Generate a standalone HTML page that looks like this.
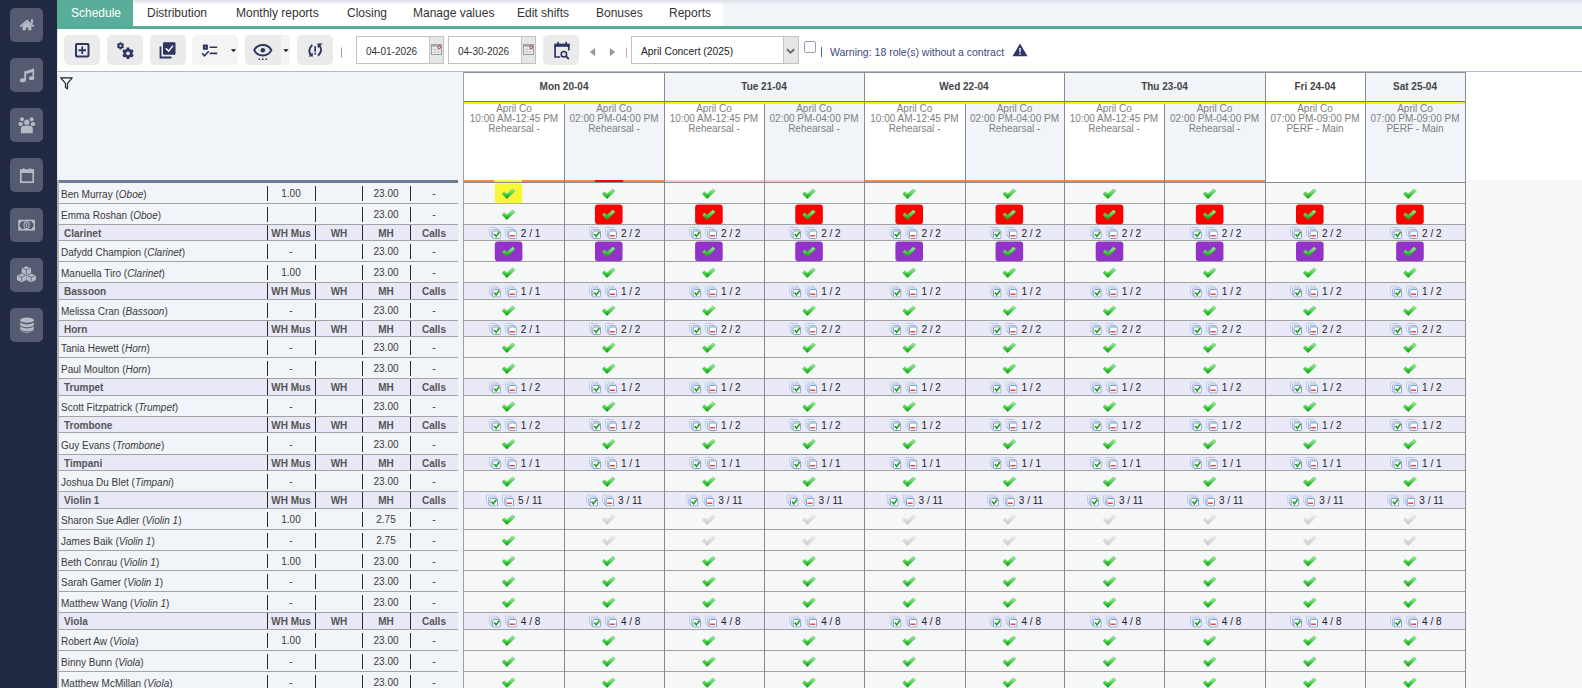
<!DOCTYPE html>
<html><head><meta charset="utf-8"><title>Schedule</title>
<style>
*{box-sizing:border-box;margin:0;padding:0}
html,body{width:1582px;height:688px;overflow:hidden;background:#fff;font-family:"Liberation Sans",sans-serif;color:#333}
.abs{position:absolute}
.sb{position:absolute;left:0;top:0;width:57px;height:688px;background:#212842}
.sbb{position:absolute;left:10px;width:33px;height:34px;border-radius:5px;background:#545a6f}
.sbb svg{position:absolute;left:0;top:0}
.tabs{position:absolute;left:57px;top:0;width:1525px;height:26px;background:#f2f5fa}
.tabw{position:absolute;left:76px;top:0;width:590px;height:26px;background:#fff}
.tabshade{position:absolute;left:0;top:0;width:1525px;height:5px;background:linear-gradient(#dde1e8,rgba(240,243,249,0))}
.tab{position:absolute;top:0;height:26px;line-height:26px;font-size:12px;color:#333;white-space:nowrap}
.green{position:absolute;left:57px;top:26px;width:1525px;height:3px;background:#55ad97}
.tb{position:absolute;left:57px;top:29px;width:1525px;height:43px;background:#fff;border-bottom:1px solid #9fbde8}
.btn{position:absolute;top:35px;height:30px;border-radius:5px;background:#ebebeb}
.pane{position:absolute;left:57px;top:72px;width:406px;height:616px;background:#f1f5fa}
.lt{position:absolute;left:57px;width:401px}
.nm{position:absolute;left:61px;font-size:10px;color:#3a3a3a;white-space:nowrap}
.gn{position:absolute;left:64px;font-size:10px;font-weight:bold;color:#555;white-space:nowrap}
.val{position:absolute;font-size:10px;color:#3a3a3a;text-align:center;width:48px}
.gh{position:absolute;font-size:10px;font-weight:bold;color:#555;text-align:center;width:48px}
.hd{position:absolute;font-size:10px;font-weight:bold;color:#444;text-align:center}
.sh{position:absolute;font-size:10px;line-height:10px;color:#7e7e7e;text-align:center;white-space:nowrap}
.cnt{position:absolute;font-size:10px;color:#222;white-space:nowrap}
</style></head><body>

<div class="sb"></div>
<div class="sbb" style="top:8px"><svg width="33" height="34" viewBox="0 0 33 34"><path d="M10.2 18.6 L17 12.6 L23.8 18.6" stroke="#b6bac6" stroke-width="1.7" fill="none"/><rect x="21" y="11.2" width="1.9" height="4.5" fill="#b6bac6"/><path d="M12.6 17.6 L17 13.8 L21.4 17.6 L21.4 22.2 L18.2 22.2 L18.2 19.4 L15.8 19.4 L15.8 22.2 L12.6 22.2 Z" fill="#b6bac6"/></svg></div>
<div class="sbb" style="top:58px"><svg width="33" height="34" viewBox="0 0 33 34"><path d="M14.6 13.4 L24 10.4 L24 13.6 L14.6 16.6 Z" fill="#b6bac6"/><rect x="14.3" y="13.4" width="1.8" height="9" fill="#b6bac6"/><rect x="22.4" y="10.6" width="1.7" height="10" fill="#b6bac6"/><ellipse cx="12.8" cy="22.3" rx="2.9" ry="2" fill="#b6bac6"/><ellipse cx="21.6" cy="20.2" rx="2.8" ry="1.9" fill="#b6bac6"/></svg></div>
<div class="sbb" style="top:108px"><svg width="33" height="34" viewBox="0 0 33 34"><circle cx="12" cy="11.3" r="2" fill="#b6bac6"/><circle cx="21.6" cy="11.3" r="2" fill="#b6bac6"/><ellipse cx="10.6" cy="16" rx="2.3" ry="2.1" fill="#b6bac6"/><ellipse cx="23" cy="16" rx="2.3" ry="2.1" fill="#b6bac6"/><circle cx="16.8" cy="14.3" r="3.1" stroke="#545a6f" stroke-width="0.7" fill="#b6bac6"/><path d="M10.9 25.2 L10.9 21 Q10.9 17.8 14 17.8 L19.6 17.8 Q22.8 17.8 22.8 21 L22.8 25.2 Z" fill="#b6bac6"/></svg></div>
<div class="sbb" style="top:158px"><svg width="33" height="34" viewBox="0 0 33 34"><rect x="10.8" y="12.2" width="12.4" height="12" fill="none" stroke="#b6bac6" stroke-width="1.7"/><rect x="10" y="11.4" width="14" height="3.6" fill="#b6bac6"/><path d="M12.2 11.6 Q13.7 8.4 15.2 11.6 Z M18.7 11.6 Q20.2 8.4 21.7 11.6 Z" fill="#b6bac6"/></svg></div>
<div class="sbb" style="top:208px"><svg width="33" height="34" viewBox="0 0 33 34"><rect x="8.2" y="11.7" width="16.8" height="10.9" fill="#b6bac6"/><path d="M11.5 13.2 H21.7 Q21.7 15.3 23.5 15.3 V19.1 Q21.7 19.1 21.7 21.1 H11.5 Q11.5 19.1 9.7 19.1 V15.3 Q11.5 15.3 11.5 13.2 Z" fill="#545a6f"/><ellipse cx="16.6" cy="17.15" rx="2.6" ry="3.4" fill="none" stroke="#b6bac6" stroke-width="1.1"/><rect x="16.1" y="15.4" width="1.1" height="3.6" fill="#b6bac6"/><rect x="15.4" y="15.4" width="1.2" height="0.9" fill="#b6bac6"/></svg></div>
<div class="sbb" style="top:258px"><svg width="33" height="34" viewBox="0 0 33 34"><path d="M16.4 8.2 L21.1 10.4 L21.1 14.7 L16.4 16.9 L11.7 14.7 L11.7 10.4 Z" fill="#b6bac6"/><path d="M11.6 15.5 L16.3 17.7 L16.3 22 L11.6 24.2 L6.9 22 L6.9 17.7 Z" fill="#b6bac6"/><path d="M21.2 15.5 L25.9 17.7 L25.9 22 L21.2 24.2 L16.5 22 L16.5 17.7 Z" fill="#b6bac6"/><path d="M13.2 10.5 L16.4 12 L19.6 10.5 M16.4 12 V15.8 M8.4 17.8 L11.6 19.3 L14.8 17.8 M11.6 19.3 V23.1 M18 17.8 L21.2 19.3 L24.4 17.8 M21.2 19.3 V23.1" stroke="#545a6f" stroke-width="0.8" fill="none"/></svg></div>
<div class="sbb" style="top:308px"><svg width="33" height="34" viewBox="0 0 33 34"><ellipse cx="17" cy="12.2" rx="6.8" ry="2.6" fill="#b6bac6"/><path d="M10.2 14.6 Q17 18.4 23.8 14.6 L23.8 17.4 Q17 21.2 10.2 17.4 Z" fill="#b6bac6"/><path d="M10.2 18.6 Q17 22.4 23.8 18.6 L23.8 21.4 Q17 25.2 10.2 21.4 Z" fill="#b6bac6"/><path d="M10.2 22.2 Q17 26 23.8 22.2 L23.8 22.8 Q17 26.8 10.2 22.8 Z" fill="#b6bac6"/></svg></div>
<div class="tabs"><div class="tabw"></div><div class="tabshade"></div></div>
<div class="abs" style="left:57px;top:0;width:76px;height:26px;background:#58ae98"></div>
<div class="tab" style="left:71px;color:#fff">Schedule</div>
<div class="tab" style="left:147px;color:#333">Distribution</div>
<div class="tab" style="left:236px;color:#333">Monthly reports</div>
<div class="tab" style="left:347px;color:#333">Closing</div>
<div class="tab" style="left:413px;color:#333">Manage values</div>
<div class="tab" style="left:517px;color:#333">Edit shifts</div>
<div class="tab" style="left:596px;color:#333">Bonuses</div>
<div class="tab" style="left:669px;color:#333">Reports</div>
<div class="green"></div>
<div class="tb"></div>
<div class="btn" style="left:64px;width:36px;background:#ebebeb"></div>
<div class="btn" style="left:107px;width:36px;background:#ebebeb"></div>
<div class="btn" style="left:150px;width:36px;background:#ebebeb"></div>
<div class="btn" style="left:192px;width:46px;background:#f4f4f4"></div>
<div class="btn" style="left:245px;width:45px;background:#f4f4f4"></div>
<div class="btn" style="left:297px;width:36px;background:#ebebeb"></div>
<div class="btn" style="left:543px;width:36px;background:#ebebeb"></div>
<div class="abs" style="left:245px;top:35px;width:36px;height:30px;background:#ebebeb;border-radius:5px 0 0 5px"></div>
<svg class="abs" style="left:0;top:0" width="700" height="72" viewBox="0 0 700 72">
<rect x="76" y="44" width="12.5" height="12.5" rx="1" fill="none" stroke="#2d3561" stroke-width="2"/>
<path d="M82.25 46.5 V54 M78.5 50.25 H86" stroke="#2d3561" stroke-width="1.8"/>
<g fill="#2d3561"><circle cx="120.5" cy="45.8" r="2.85"/><circle cx="128" cy="53.3" r="4.55"/></g>
<g stroke="#2d3561">
<path d="M120.5 42.2 V49.4 M117.38 44 L123.62 47.6 M117.38 47.6 L123.62 44" stroke-width="1.9"/>
<path d="M128 47.5 V59.1 M122.98 50.4 L133.02 56.2 M122.98 56.2 L133.02 50.4" stroke-width="2.8"/>
</g>
<circle cx="120.5" cy="45.8" r="1.05" fill="#ebebeb"/>
<circle cx="128" cy="53.3" r="1.85" fill="#ebebeb"/>
<rect x="163" y="42.3" width="12.5" height="12.5" rx="1.2" fill="#2d3561"/>
<path d="M165.8 48.3 L168.6 51.2 L173 45.6" stroke="#fff" stroke-width="1.5" fill="none"/>
<path d="M160.5 46.5 V57.5 H171.5" stroke="#2d3561" stroke-width="1.8" fill="none"/>
<rect x="202.9" y="44.6" width="5" height="5.1" rx="0.5" fill="#2d3561"/><rect x="205" y="46.7" width="0.9" height="0.9" fill="#cfd3e0"/>
<path d="M209.6 47.2 H217.2 M209.6 53.4 H217.2" stroke="#2d3561" stroke-width="1.6"/>
<path d="M202.2 53.2 L204.4 55.8 L208.8 51.2" stroke="#2d3561" stroke-width="1.5" fill="none"/>
<path d="M230.8 49.3 H236.2 L233.5 52 Z" fill="#111"/>
<path d="M254.2 50.2 C257.5 43.2 268.1 43.2 271.4 50.2 C268.1 57.2 257.5 57.2 254.2 50.2 Z" fill="none" stroke="#2d3561" stroke-width="1.9"/>
<circle cx="262.8" cy="50.2" r="2.3" fill="#2d3561"/>
<path d="M258.6 59.2 h1.6 M262 59.2 h1.6 M265.4 59.2 h1.6" stroke="#2d3561" stroke-width="1.5"/>
<path d="M283.3 49.3 H288.7 L286 52 Z" fill="#111"/>
<path d="M312.3 44.8 Q307.2 50 310.8 55" fill="none" stroke="#2d3561" stroke-width="1.9"/>
<path d="M308.2 56.6 L313 56.6 L312.6 52.4 Z" fill="#2d3561"/>
<path d="M318.4 44.6 Q324 50 318 55.8" fill="none" stroke="#2d3561" stroke-width="1.9"/>
<path d="M317.4 43.6 L322.7 43.6 L317.8 48.2 Z" fill="#2d3561"/>
<rect x="314.3" y="46.2" width="1.7" height="5.6" fill="#2d3561"/>
<rect x="314.3" y="52.8" width="1.7" height="1.7" fill="#2d3561"/>
<rect x="341" y="47.5" width="1" height="10" fill="#8a9bcf"/>
<path d="M555.1 45 H568.8 V50.6 M555.1 45 V57 H560.2" fill="none" stroke="#2d3561" stroke-width="1.7"/>
<rect x="554.3" y="43.6" width="15.3" height="3.2" fill="#2d3561"/>
<rect x="557.4" y="41.8" width="1.6" height="2.5" fill="#2d3561"/>
<rect x="565.4" y="41.8" width="1.6" height="2.5" fill="#2d3561"/>
<circle cx="563.9" cy="54.2" r="2.7" fill="none" stroke="#2d3561" stroke-width="1.6"/>
<path d="M565.9 56.2 L568.8 59" stroke="#2d3561" stroke-width="1.8"/>
<path d="M595.2 48 V56.2 L589.8 52.1 Z" fill="#999"/>
<path d="M609.8 48 V56.2 L615.2 52.1 Z" fill="#999"/>
<rect x="626" y="47.5" width="1" height="10" fill="#c8a0c0"/>
</svg>
<div class="abs" style="left:356px;top:36px;width:88px;height:28px;border:1px solid #bfc4cb;background:#fff"></div>
<div class="abs" style="left:429px;top:36px;width:15px;height:28px;border:1px solid #bfc4cb;background:#e6e6e6"></div>
<div class="abs" style="left:366px;top:46px;font-size:10px;line-height:11px;color:#333;white-space:nowrap">04-01-2026</div>
<svg class="abs" style="left:431px;top:44px" width="11" height="11" viewBox="0 0 11 11">
<rect x="0.5" y="0.5" width="10" height="10" fill="#f4f4f4" stroke="#9a9a9a"/>
<rect x="0.5" y="0.5" width="10" height="2.2" fill="#a8a8a8"/>
<path d="M3.8 2.7 V10.5 M7 2.7 V10.5 M0.5 5.4 H10.5 M0.5 8 H10.5" stroke="#bdbdbd" stroke-width="0.7"/>
<circle cx="8.2" cy="3.3" r="1.4" fill="#e0e0e0" stroke="#c02838" stroke-width="0.9"/>
</svg>
<div class="abs" style="left:448px;top:36px;width:88px;height:28px;border:1px solid #bfc4cb;background:#fff"></div>
<div class="abs" style="left:521px;top:36px;width:15px;height:28px;border:1px solid #bfc4cb;background:#e6e6e6"></div>
<div class="abs" style="left:458px;top:46px;font-size:10px;line-height:11px;color:#333;white-space:nowrap">04-30-2026</div>
<svg class="abs" style="left:523px;top:44px" width="11" height="11" viewBox="0 0 11 11">
<rect x="0.5" y="0.5" width="10" height="10" fill="#f4f4f4" stroke="#9a9a9a"/>
<rect x="0.5" y="0.5" width="10" height="2.2" fill="#a8a8a8"/>
<path d="M3.8 2.7 V10.5 M7 2.7 V10.5 M0.5 5.4 H10.5 M0.5 8 H10.5" stroke="#bdbdbd" stroke-width="0.7"/>
<circle cx="8.2" cy="3.3" r="1.4" fill="#e0e0e0" stroke="#c02838" stroke-width="0.9"/>
</svg>
<div class="abs" style="left:631px;top:36px;width:168px;height:28px;border:1px solid #bfc4cb;background:#fff"></div>
<div class="abs" style="left:783px;top:36px;width:16px;height:28px;border:1px solid #bfc4cb;background:#e6e6e6"></div>
<div class="abs" style="left:641px;top:46px;font-size:10.3px;line-height:11px;color:#222;white-space:nowrap">April Concert (2025)</div>
<svg class="abs" style="left:784px;top:46px" width="12" height="10" viewBox="0 0 12 10"><path d="M3 3.3 L6.6 6.8 L10.2 3.3" stroke="#6a6a6a" stroke-width="1.9" fill="none"/></svg>
<div class="abs" style="left:804px;top:41px;width:12px;height:12px;border:1px solid #9c9cab;border-radius:2px;background:#fff"></div>
<div class="abs" style="left:821px;top:47px;width:1px;height:10px;background:#4a68c8"></div>
<div class="abs" style="left:830px;top:47px;font-size:10.5px;line-height:11px;color:#3d4a80;white-space:nowrap">Warning: 18 role(s) without a contract</div>
<svg class="abs" style="left:1012px;top:43px" width="16" height="14" viewBox="0 0 16 14"><path d="M8 0.5 L15.5 13.2 H0.5 Z" fill="#2d3768"/><rect x="7.3" y="5" width="1.4" height="4.2" fill="#fff"/><rect x="7.3" y="10.2" width="1.4" height="1.4" fill="#fff"/></svg>
<div class="pane"></div>
<div class="abs" style="left:57px;top:29px;width:1px;height:151px;background:#dbe6f6"></div>
<svg class="abs" style="left:60px;top:77px" width="13" height="13" viewBox="0 0 13 13"><path d="M0.8 0.8 H12.2 L7.5 6.3 V11.8 L5.5 10.5 V6.3 Z" fill="none" stroke="#222" stroke-width="1.2" stroke-linejoin="round"/></svg>
<div class="abs" style="left:57px;top:180px;width:2px;height:508px;background:#b0b3b8"></div>
<div class="abs" style="left:59px;top:180px;width:399px;height:3px;background:#6d7f94"></div>
<div class="abs" style="left:59px;top:183px;width:399px;height:20px;background:#f1f4f9"></div>
<div class="nm" style="top:185px;height:20px;line-height:20px">Ben Murray (<i>Oboe</i>)</div>
<div class="abs" style="left:267px;top:186px;width:1px;height:15px;background:#2a2a2a"></div>
<div class="abs" style="left:315px;top:186px;width:1px;height:15px;background:#2a2a2a"></div>
<div class="abs" style="left:362px;top:186px;width:1px;height:15px;background:#2a2a2a"></div>
<div class="abs" style="left:410px;top:186px;width:1px;height:15px;background:#2a2a2a"></div>
<div class="val" style="left:267px;top:184px;height:20px;line-height:20px">1.00</div>
<div class="val" style="left:362px;top:184px;height:20px;line-height:20px">23.00</div>
<div class="val" style="left:410px;top:184px;height:20px;line-height:20px">-</div>
<div class="abs" style="left:59px;top:203px;width:399px;height:1px;background:#a3a3a3"></div>
<div class="abs" style="left:59px;top:204px;width:399px;height:20px;background:#f1f4f9"></div>
<div class="nm" style="top:206px;height:20px;line-height:20px">Emma Roshan (<i>Oboe</i>)</div>
<div class="abs" style="left:267px;top:207px;width:1px;height:15px;background:#2a2a2a"></div>
<div class="abs" style="left:315px;top:207px;width:1px;height:15px;background:#2a2a2a"></div>
<div class="abs" style="left:362px;top:207px;width:1px;height:15px;background:#2a2a2a"></div>
<div class="abs" style="left:410px;top:207px;width:1px;height:15px;background:#2a2a2a"></div>
<div class="val" style="left:362px;top:205px;height:20px;line-height:20px">23.00</div>
<div class="val" style="left:410px;top:205px;height:20px;line-height:20px">-</div>
<div class="abs" style="left:59px;top:224px;width:399px;height:1px;background:#a3a3a3"></div>
<div class="abs" style="left:59px;top:225px;width:399px;height:15px;background:#e8e8f6"></div>
<div class="gn" style="top:226px;height:15px;line-height:15px">Clarinet</div>
<div class="abs" style="left:267px;top:225px;width:1px;height:15px;background:#2a2a2a"></div>
<div class="abs" style="left:315px;top:225px;width:1px;height:15px;background:#2a2a2a"></div>
<div class="abs" style="left:362px;top:225px;width:1px;height:15px;background:#2a2a2a"></div>
<div class="abs" style="left:410px;top:225px;width:1px;height:15px;background:#2a2a2a"></div>
<div class="gh" style="left:267px;top:226px;height:15px;line-height:15px">WH Mus</div>
<div class="gh" style="left:315px;top:226px;height:15px;line-height:15px">WH</div>
<div class="gh" style="left:362px;top:226px;height:15px;line-height:15px">MH</div>
<div class="gh" style="left:410px;top:226px;height:15px;line-height:15px">Calls</div>
<div class="abs" style="left:59px;top:240px;width:399px;height:1px;background:#a3a3a3"></div>
<div class="abs" style="left:59px;top:241px;width:399px;height:20px;background:#f1f4f9"></div>
<div class="nm" style="top:243px;height:20px;line-height:20px">Dafydd Champion (<i>Clarinet</i>)</div>
<div class="abs" style="left:267px;top:244px;width:1px;height:15px;background:#2a2a2a"></div>
<div class="abs" style="left:315px;top:244px;width:1px;height:15px;background:#2a2a2a"></div>
<div class="abs" style="left:362px;top:244px;width:1px;height:15px;background:#2a2a2a"></div>
<div class="abs" style="left:410px;top:244px;width:1px;height:15px;background:#2a2a2a"></div>
<div class="val" style="left:267px;top:242px;height:20px;line-height:20px">-</div>
<div class="val" style="left:362px;top:242px;height:20px;line-height:20px">23.00</div>
<div class="val" style="left:410px;top:242px;height:20px;line-height:20px">-</div>
<div class="abs" style="left:59px;top:261px;width:399px;height:1px;background:#a3a3a3"></div>
<div class="abs" style="left:59px;top:262px;width:399px;height:20px;background:#f1f4f9"></div>
<div class="nm" style="top:264px;height:20px;line-height:20px">Manuella Tiro (<i>Clarinet</i>)</div>
<div class="abs" style="left:267px;top:265px;width:1px;height:15px;background:#2a2a2a"></div>
<div class="abs" style="left:315px;top:265px;width:1px;height:15px;background:#2a2a2a"></div>
<div class="abs" style="left:362px;top:265px;width:1px;height:15px;background:#2a2a2a"></div>
<div class="abs" style="left:410px;top:265px;width:1px;height:15px;background:#2a2a2a"></div>
<div class="val" style="left:267px;top:263px;height:20px;line-height:20px">1.00</div>
<div class="val" style="left:362px;top:263px;height:20px;line-height:20px">23.00</div>
<div class="val" style="left:410px;top:263px;height:20px;line-height:20px">-</div>
<div class="abs" style="left:59px;top:282px;width:399px;height:1px;background:#a3a3a3"></div>
<div class="abs" style="left:59px;top:283px;width:399px;height:16px;background:#e8e8f6"></div>
<div class="gn" style="top:284px;height:16px;line-height:16px">Bassoon</div>
<div class="abs" style="left:267px;top:283px;width:1px;height:16px;background:#2a2a2a"></div>
<div class="abs" style="left:315px;top:283px;width:1px;height:16px;background:#2a2a2a"></div>
<div class="abs" style="left:362px;top:283px;width:1px;height:16px;background:#2a2a2a"></div>
<div class="abs" style="left:410px;top:283px;width:1px;height:16px;background:#2a2a2a"></div>
<div class="gh" style="left:267px;top:284px;height:16px;line-height:16px">WH Mus</div>
<div class="gh" style="left:315px;top:284px;height:16px;line-height:16px">WH</div>
<div class="gh" style="left:362px;top:284px;height:16px;line-height:16px">MH</div>
<div class="gh" style="left:410px;top:284px;height:16px;line-height:16px">Calls</div>
<div class="abs" style="left:59px;top:299px;width:399px;height:1px;background:#a3a3a3"></div>
<div class="abs" style="left:59px;top:300px;width:399px;height:20px;background:#f1f4f9"></div>
<div class="nm" style="top:302px;height:20px;line-height:20px">Melissa Cran (<i>Bassoon</i>)</div>
<div class="abs" style="left:267px;top:303px;width:1px;height:15px;background:#2a2a2a"></div>
<div class="abs" style="left:315px;top:303px;width:1px;height:15px;background:#2a2a2a"></div>
<div class="abs" style="left:362px;top:303px;width:1px;height:15px;background:#2a2a2a"></div>
<div class="abs" style="left:410px;top:303px;width:1px;height:15px;background:#2a2a2a"></div>
<div class="val" style="left:267px;top:301px;height:20px;line-height:20px">-</div>
<div class="val" style="left:362px;top:301px;height:20px;line-height:20px">23.00</div>
<div class="val" style="left:410px;top:301px;height:20px;line-height:20px">-</div>
<div class="abs" style="left:59px;top:320px;width:399px;height:1px;background:#a3a3a3"></div>
<div class="abs" style="left:59px;top:321px;width:399px;height:15px;background:#e8e8f6"></div>
<div class="gn" style="top:322px;height:15px;line-height:15px">Horn</div>
<div class="abs" style="left:267px;top:321px;width:1px;height:15px;background:#2a2a2a"></div>
<div class="abs" style="left:315px;top:321px;width:1px;height:15px;background:#2a2a2a"></div>
<div class="abs" style="left:362px;top:321px;width:1px;height:15px;background:#2a2a2a"></div>
<div class="abs" style="left:410px;top:321px;width:1px;height:15px;background:#2a2a2a"></div>
<div class="gh" style="left:267px;top:322px;height:15px;line-height:15px">WH Mus</div>
<div class="gh" style="left:315px;top:322px;height:15px;line-height:15px">WH</div>
<div class="gh" style="left:362px;top:322px;height:15px;line-height:15px">MH</div>
<div class="gh" style="left:410px;top:322px;height:15px;line-height:15px">Calls</div>
<div class="abs" style="left:59px;top:336px;width:399px;height:1px;background:#a3a3a3"></div>
<div class="abs" style="left:59px;top:337px;width:399px;height:20px;background:#f1f4f9"></div>
<div class="nm" style="top:339px;height:20px;line-height:20px">Tania Hewett (<i>Horn</i>)</div>
<div class="abs" style="left:267px;top:340px;width:1px;height:15px;background:#2a2a2a"></div>
<div class="abs" style="left:315px;top:340px;width:1px;height:15px;background:#2a2a2a"></div>
<div class="abs" style="left:362px;top:340px;width:1px;height:15px;background:#2a2a2a"></div>
<div class="abs" style="left:410px;top:340px;width:1px;height:15px;background:#2a2a2a"></div>
<div class="val" style="left:267px;top:338px;height:20px;line-height:20px">-</div>
<div class="val" style="left:362px;top:338px;height:20px;line-height:20px">23.00</div>
<div class="val" style="left:410px;top:338px;height:20px;line-height:20px">-</div>
<div class="abs" style="left:59px;top:357px;width:399px;height:1px;background:#a3a3a3"></div>
<div class="abs" style="left:59px;top:358px;width:399px;height:20px;background:#f1f4f9"></div>
<div class="nm" style="top:360px;height:20px;line-height:20px">Paul Moulton (<i>Horn</i>)</div>
<div class="abs" style="left:267px;top:361px;width:1px;height:15px;background:#2a2a2a"></div>
<div class="abs" style="left:315px;top:361px;width:1px;height:15px;background:#2a2a2a"></div>
<div class="abs" style="left:362px;top:361px;width:1px;height:15px;background:#2a2a2a"></div>
<div class="abs" style="left:410px;top:361px;width:1px;height:15px;background:#2a2a2a"></div>
<div class="val" style="left:267px;top:359px;height:20px;line-height:20px">-</div>
<div class="val" style="left:362px;top:359px;height:20px;line-height:20px">23.00</div>
<div class="val" style="left:410px;top:359px;height:20px;line-height:20px">-</div>
<div class="abs" style="left:59px;top:378px;width:399px;height:1px;background:#a3a3a3"></div>
<div class="abs" style="left:59px;top:379px;width:399px;height:16px;background:#e8e8f6"></div>
<div class="gn" style="top:380px;height:16px;line-height:16px">Trumpet</div>
<div class="abs" style="left:267px;top:379px;width:1px;height:16px;background:#2a2a2a"></div>
<div class="abs" style="left:315px;top:379px;width:1px;height:16px;background:#2a2a2a"></div>
<div class="abs" style="left:362px;top:379px;width:1px;height:16px;background:#2a2a2a"></div>
<div class="abs" style="left:410px;top:379px;width:1px;height:16px;background:#2a2a2a"></div>
<div class="gh" style="left:267px;top:380px;height:16px;line-height:16px">WH Mus</div>
<div class="gh" style="left:315px;top:380px;height:16px;line-height:16px">WH</div>
<div class="gh" style="left:362px;top:380px;height:16px;line-height:16px">MH</div>
<div class="gh" style="left:410px;top:380px;height:16px;line-height:16px">Calls</div>
<div class="abs" style="left:59px;top:395px;width:399px;height:1px;background:#a3a3a3"></div>
<div class="abs" style="left:59px;top:396px;width:399px;height:20px;background:#f1f4f9"></div>
<div class="nm" style="top:398px;height:20px;line-height:20px">Scott Fitzpatrick (<i>Trumpet</i>)</div>
<div class="abs" style="left:267px;top:399px;width:1px;height:15px;background:#2a2a2a"></div>
<div class="abs" style="left:315px;top:399px;width:1px;height:15px;background:#2a2a2a"></div>
<div class="abs" style="left:362px;top:399px;width:1px;height:15px;background:#2a2a2a"></div>
<div class="abs" style="left:410px;top:399px;width:1px;height:15px;background:#2a2a2a"></div>
<div class="val" style="left:267px;top:397px;height:20px;line-height:20px">-</div>
<div class="val" style="left:362px;top:397px;height:20px;line-height:20px">23.00</div>
<div class="val" style="left:410px;top:397px;height:20px;line-height:20px">-</div>
<div class="abs" style="left:59px;top:416px;width:399px;height:1px;background:#a3a3a3"></div>
<div class="abs" style="left:59px;top:417px;width:399px;height:15px;background:#e8e8f6"></div>
<div class="gn" style="top:418px;height:15px;line-height:15px">Trombone</div>
<div class="abs" style="left:267px;top:417px;width:1px;height:15px;background:#2a2a2a"></div>
<div class="abs" style="left:315px;top:417px;width:1px;height:15px;background:#2a2a2a"></div>
<div class="abs" style="left:362px;top:417px;width:1px;height:15px;background:#2a2a2a"></div>
<div class="abs" style="left:410px;top:417px;width:1px;height:15px;background:#2a2a2a"></div>
<div class="gh" style="left:267px;top:418px;height:15px;line-height:15px">WH Mus</div>
<div class="gh" style="left:315px;top:418px;height:15px;line-height:15px">WH</div>
<div class="gh" style="left:362px;top:418px;height:15px;line-height:15px">MH</div>
<div class="gh" style="left:410px;top:418px;height:15px;line-height:15px">Calls</div>
<div class="abs" style="left:59px;top:432px;width:399px;height:1px;background:#a3a3a3"></div>
<div class="abs" style="left:59px;top:433px;width:399px;height:21px;background:#f1f4f9"></div>
<div class="nm" style="top:435px;height:21px;line-height:21px">Guy Evans (<i>Trombone</i>)</div>
<div class="abs" style="left:267px;top:436px;width:1px;height:16px;background:#2a2a2a"></div>
<div class="abs" style="left:315px;top:436px;width:1px;height:16px;background:#2a2a2a"></div>
<div class="abs" style="left:362px;top:436px;width:1px;height:16px;background:#2a2a2a"></div>
<div class="abs" style="left:410px;top:436px;width:1px;height:16px;background:#2a2a2a"></div>
<div class="val" style="left:267px;top:434px;height:21px;line-height:21px">-</div>
<div class="val" style="left:362px;top:434px;height:21px;line-height:21px">23.00</div>
<div class="val" style="left:410px;top:434px;height:21px;line-height:21px">-</div>
<div class="abs" style="left:59px;top:454px;width:399px;height:1px;background:#a3a3a3"></div>
<div class="abs" style="left:59px;top:455px;width:399px;height:15px;background:#e8e8f6"></div>
<div class="gn" style="top:456px;height:15px;line-height:15px">Timpani</div>
<div class="abs" style="left:267px;top:455px;width:1px;height:15px;background:#2a2a2a"></div>
<div class="abs" style="left:315px;top:455px;width:1px;height:15px;background:#2a2a2a"></div>
<div class="abs" style="left:362px;top:455px;width:1px;height:15px;background:#2a2a2a"></div>
<div class="abs" style="left:410px;top:455px;width:1px;height:15px;background:#2a2a2a"></div>
<div class="gh" style="left:267px;top:456px;height:15px;line-height:15px">WH Mus</div>
<div class="gh" style="left:315px;top:456px;height:15px;line-height:15px">WH</div>
<div class="gh" style="left:362px;top:456px;height:15px;line-height:15px">MH</div>
<div class="gh" style="left:410px;top:456px;height:15px;line-height:15px">Calls</div>
<div class="abs" style="left:59px;top:470px;width:399px;height:1px;background:#a3a3a3"></div>
<div class="abs" style="left:59px;top:471px;width:399px;height:20px;background:#f1f4f9"></div>
<div class="nm" style="top:473px;height:20px;line-height:20px">Joshua Du Blet (<i>Timpani</i>)</div>
<div class="abs" style="left:267px;top:474px;width:1px;height:15px;background:#2a2a2a"></div>
<div class="abs" style="left:315px;top:474px;width:1px;height:15px;background:#2a2a2a"></div>
<div class="abs" style="left:362px;top:474px;width:1px;height:15px;background:#2a2a2a"></div>
<div class="abs" style="left:410px;top:474px;width:1px;height:15px;background:#2a2a2a"></div>
<div class="val" style="left:267px;top:472px;height:20px;line-height:20px">-</div>
<div class="val" style="left:362px;top:472px;height:20px;line-height:20px">23.00</div>
<div class="val" style="left:410px;top:472px;height:20px;line-height:20px">-</div>
<div class="abs" style="left:59px;top:491px;width:399px;height:1px;background:#a3a3a3"></div>
<div class="abs" style="left:59px;top:492px;width:399px;height:16px;background:#e8e8f6"></div>
<div class="gn" style="top:493px;height:16px;line-height:16px">Violin 1</div>
<div class="abs" style="left:267px;top:492px;width:1px;height:16px;background:#2a2a2a"></div>
<div class="abs" style="left:315px;top:492px;width:1px;height:16px;background:#2a2a2a"></div>
<div class="abs" style="left:362px;top:492px;width:1px;height:16px;background:#2a2a2a"></div>
<div class="abs" style="left:410px;top:492px;width:1px;height:16px;background:#2a2a2a"></div>
<div class="gh" style="left:267px;top:493px;height:16px;line-height:16px">WH Mus</div>
<div class="gh" style="left:315px;top:493px;height:16px;line-height:16px">WH</div>
<div class="gh" style="left:362px;top:493px;height:16px;line-height:16px">MH</div>
<div class="gh" style="left:410px;top:493px;height:16px;line-height:16px">Calls</div>
<div class="abs" style="left:59px;top:508px;width:399px;height:1px;background:#a3a3a3"></div>
<div class="abs" style="left:59px;top:509px;width:399px;height:20px;background:#f1f4f9"></div>
<div class="nm" style="top:511px;height:20px;line-height:20px">Sharon Sue Adler (<i>Violin 1</i>)</div>
<div class="abs" style="left:267px;top:512px;width:1px;height:15px;background:#2a2a2a"></div>
<div class="abs" style="left:315px;top:512px;width:1px;height:15px;background:#2a2a2a"></div>
<div class="abs" style="left:362px;top:512px;width:1px;height:15px;background:#2a2a2a"></div>
<div class="abs" style="left:410px;top:512px;width:1px;height:15px;background:#2a2a2a"></div>
<div class="val" style="left:267px;top:510px;height:20px;line-height:20px">1.00</div>
<div class="val" style="left:362px;top:510px;height:20px;line-height:20px">2.75</div>
<div class="val" style="left:410px;top:510px;height:20px;line-height:20px">-</div>
<div class="abs" style="left:59px;top:529px;width:399px;height:1px;background:#a3a3a3"></div>
<div class="abs" style="left:59px;top:530px;width:399px;height:20px;background:#f1f4f9"></div>
<div class="nm" style="top:532px;height:20px;line-height:20px">James Baik (<i>Violin 1</i>)</div>
<div class="abs" style="left:267px;top:533px;width:1px;height:15px;background:#2a2a2a"></div>
<div class="abs" style="left:315px;top:533px;width:1px;height:15px;background:#2a2a2a"></div>
<div class="abs" style="left:362px;top:533px;width:1px;height:15px;background:#2a2a2a"></div>
<div class="abs" style="left:410px;top:533px;width:1px;height:15px;background:#2a2a2a"></div>
<div class="val" style="left:267px;top:531px;height:20px;line-height:20px">-</div>
<div class="val" style="left:362px;top:531px;height:20px;line-height:20px">2.75</div>
<div class="val" style="left:410px;top:531px;height:20px;line-height:20px">-</div>
<div class="abs" style="left:59px;top:550px;width:399px;height:1px;background:#a3a3a3"></div>
<div class="abs" style="left:59px;top:551px;width:399px;height:19px;background:#f1f4f9"></div>
<div class="nm" style="top:553px;height:19px;line-height:19px">Beth Conrau (<i>Violin 1</i>)</div>
<div class="abs" style="left:267px;top:554px;width:1px;height:14px;background:#2a2a2a"></div>
<div class="abs" style="left:315px;top:554px;width:1px;height:14px;background:#2a2a2a"></div>
<div class="abs" style="left:362px;top:554px;width:1px;height:14px;background:#2a2a2a"></div>
<div class="abs" style="left:410px;top:554px;width:1px;height:14px;background:#2a2a2a"></div>
<div class="val" style="left:267px;top:552px;height:19px;line-height:19px">1.00</div>
<div class="val" style="left:362px;top:552px;height:19px;line-height:19px">23.00</div>
<div class="val" style="left:410px;top:552px;height:19px;line-height:19px">-</div>
<div class="abs" style="left:59px;top:570px;width:399px;height:1px;background:#a3a3a3"></div>
<div class="abs" style="left:59px;top:571px;width:399px;height:20px;background:#f1f4f9"></div>
<div class="nm" style="top:573px;height:20px;line-height:20px">Sarah Gamer (<i>Violin 1</i>)</div>
<div class="abs" style="left:267px;top:574px;width:1px;height:15px;background:#2a2a2a"></div>
<div class="abs" style="left:315px;top:574px;width:1px;height:15px;background:#2a2a2a"></div>
<div class="abs" style="left:362px;top:574px;width:1px;height:15px;background:#2a2a2a"></div>
<div class="abs" style="left:410px;top:574px;width:1px;height:15px;background:#2a2a2a"></div>
<div class="val" style="left:267px;top:572px;height:20px;line-height:20px">-</div>
<div class="val" style="left:362px;top:572px;height:20px;line-height:20px">23.00</div>
<div class="val" style="left:410px;top:572px;height:20px;line-height:20px">-</div>
<div class="abs" style="left:59px;top:591px;width:399px;height:1px;background:#a3a3a3"></div>
<div class="abs" style="left:59px;top:592px;width:399px;height:20px;background:#f1f4f9"></div>
<div class="nm" style="top:594px;height:20px;line-height:20px">Matthew Wang (<i>Violin 1</i>)</div>
<div class="abs" style="left:267px;top:595px;width:1px;height:15px;background:#2a2a2a"></div>
<div class="abs" style="left:315px;top:595px;width:1px;height:15px;background:#2a2a2a"></div>
<div class="abs" style="left:362px;top:595px;width:1px;height:15px;background:#2a2a2a"></div>
<div class="abs" style="left:410px;top:595px;width:1px;height:15px;background:#2a2a2a"></div>
<div class="val" style="left:267px;top:593px;height:20px;line-height:20px">-</div>
<div class="val" style="left:362px;top:593px;height:20px;line-height:20px">23.00</div>
<div class="val" style="left:410px;top:593px;height:20px;line-height:20px">-</div>
<div class="abs" style="left:59px;top:612px;width:399px;height:1px;background:#a3a3a3"></div>
<div class="abs" style="left:59px;top:613px;width:399px;height:16px;background:#e8e8f6"></div>
<div class="gn" style="top:614px;height:16px;line-height:16px">Viola</div>
<div class="abs" style="left:267px;top:613px;width:1px;height:16px;background:#2a2a2a"></div>
<div class="abs" style="left:315px;top:613px;width:1px;height:16px;background:#2a2a2a"></div>
<div class="abs" style="left:362px;top:613px;width:1px;height:16px;background:#2a2a2a"></div>
<div class="abs" style="left:410px;top:613px;width:1px;height:16px;background:#2a2a2a"></div>
<div class="gh" style="left:267px;top:614px;height:16px;line-height:16px">WH Mus</div>
<div class="gh" style="left:315px;top:614px;height:16px;line-height:16px">WH</div>
<div class="gh" style="left:362px;top:614px;height:16px;line-height:16px">MH</div>
<div class="gh" style="left:410px;top:614px;height:16px;line-height:16px">Calls</div>
<div class="abs" style="left:59px;top:629px;width:399px;height:1px;background:#a3a3a3"></div>
<div class="abs" style="left:59px;top:630px;width:399px;height:20px;background:#f1f4f9"></div>
<div class="nm" style="top:632px;height:20px;line-height:20px">Robert Aw (<i>Viola</i>)</div>
<div class="abs" style="left:267px;top:633px;width:1px;height:15px;background:#2a2a2a"></div>
<div class="abs" style="left:315px;top:633px;width:1px;height:15px;background:#2a2a2a"></div>
<div class="abs" style="left:362px;top:633px;width:1px;height:15px;background:#2a2a2a"></div>
<div class="abs" style="left:410px;top:633px;width:1px;height:15px;background:#2a2a2a"></div>
<div class="val" style="left:267px;top:631px;height:20px;line-height:20px">1.00</div>
<div class="val" style="left:362px;top:631px;height:20px;line-height:20px">23.00</div>
<div class="val" style="left:410px;top:631px;height:20px;line-height:20px">-</div>
<div class="abs" style="left:59px;top:650px;width:399px;height:1px;background:#a3a3a3"></div>
<div class="abs" style="left:59px;top:651px;width:399px;height:20px;background:#f1f4f9"></div>
<div class="nm" style="top:653px;height:20px;line-height:20px">Binny Bunn (<i>Viola</i>)</div>
<div class="abs" style="left:267px;top:654px;width:1px;height:15px;background:#2a2a2a"></div>
<div class="abs" style="left:315px;top:654px;width:1px;height:15px;background:#2a2a2a"></div>
<div class="abs" style="left:362px;top:654px;width:1px;height:15px;background:#2a2a2a"></div>
<div class="abs" style="left:410px;top:654px;width:1px;height:15px;background:#2a2a2a"></div>
<div class="val" style="left:267px;top:652px;height:20px;line-height:20px">-</div>
<div class="val" style="left:362px;top:652px;height:20px;line-height:20px">23.00</div>
<div class="val" style="left:410px;top:652px;height:20px;line-height:20px">-</div>
<div class="abs" style="left:59px;top:671px;width:399px;height:1px;background:#a3a3a3"></div>
<div class="abs" style="left:59px;top:672px;width:399px;height:20px;background:#f1f4f9"></div>
<div class="nm" style="top:674px;height:20px;line-height:20px">Matthew McMillan (<i>Viola</i>)</div>
<div class="abs" style="left:267px;top:675px;width:1px;height:15px;background:#2a2a2a"></div>
<div class="abs" style="left:315px;top:675px;width:1px;height:15px;background:#2a2a2a"></div>
<div class="abs" style="left:362px;top:675px;width:1px;height:15px;background:#2a2a2a"></div>
<div class="abs" style="left:410px;top:675px;width:1px;height:15px;background:#2a2a2a"></div>
<div class="val" style="left:267px;top:673px;height:20px;line-height:20px">-</div>
<div class="val" style="left:362px;top:673px;height:20px;line-height:20px">23.00</div>
<div class="val" style="left:410px;top:673px;height:20px;line-height:20px">-</div>
<div class="abs" style="left:59px;top:692px;width:399px;height:1px;background:#a3a3a3"></div>
<div class="abs" style="left:463px;top:72px;width:1119px;height:108px;background:#fff"></div>
<div class="abs" style="left:1466px;top:180px;width:116px;height:508px;background:#f6f7f7"></div>
<div class="abs" style="left:463px;top:72px;width:1003px;height:1px;background:#8f8f8f"></div>
<div class="abs" style="left:464px;top:73px;width:200px;height:28px;background:#fff"></div>
<div class="hd" style="left:464px;top:73px;width:200px;height:28px;line-height:28px">Mon 20-04</div>
<div class="abs" style="left:664px;top:73px;width:200px;height:28px;background:#f1f4f9"></div>
<div class="hd" style="left:664px;top:73px;width:200px;height:28px;line-height:28px">Tue 21-04</div>
<div class="abs" style="left:864px;top:73px;width:200px;height:28px;background:#fff"></div>
<div class="hd" style="left:864px;top:73px;width:200px;height:28px;line-height:28px">Wed 22-04</div>
<div class="abs" style="left:1064px;top:73px;width:201px;height:28px;background:#f1f4f9"></div>
<div class="hd" style="left:1064px;top:73px;width:201px;height:28px;line-height:28px">Thu 23-04</div>
<div class="abs" style="left:1265px;top:73px;width:100px;height:28px;background:#fff"></div>
<div class="hd" style="left:1265px;top:73px;width:100px;height:28px;line-height:28px">Fri 24-04</div>
<div class="abs" style="left:1365px;top:73px;width:100px;height:28px;background:#f1f4f9"></div>
<div class="hd" style="left:1365px;top:73px;width:100px;height:28px;line-height:28px">Sat 25-04</div>
<div class="abs" style="left:463px;top:101px;width:1003px;height:1px;background:#777"></div>
<div class="abs" style="left:463px;top:102px;width:1003px;height:2px;background:#f4f000"></div>
<div class="abs" style="left:464px;top:104px;width:100px;height:78px;background:#fff"></div>
<div class="sh" style="left:464px;top:104px;width:100px">April Co<br>10:00 AM-12:45 PM<br>Rehearsal -</div>
<div class="abs" style="left:464px;top:180px;width:100px;height:2px;background:#f2875a"></div>
<div class="abs" style="left:564px;top:104px;width:100px;height:78px;background:#f1f4f9"></div>
<div class="sh" style="left:564px;top:104px;width:100px">April Co<br>02:00 PM-04:00 PM<br>Rehearsal -</div>
<div class="abs" style="left:564px;top:180px;width:100px;height:2px;background:#f2875a"></div>
<div class="abs" style="left:664px;top:104px;width:100px;height:78px;background:#fff"></div>
<div class="sh" style="left:664px;top:104px;width:100px">April Co<br>10:00 AM-12:45 PM<br>Rehearsal -</div>
<div class="abs" style="left:664px;top:180px;width:100px;height:2px;background:#f5c9d2"></div>
<div class="abs" style="left:764px;top:104px;width:100px;height:78px;background:#f1f4f9"></div>
<div class="sh" style="left:764px;top:104px;width:100px">April Co<br>02:00 PM-04:00 PM<br>Rehearsal -</div>
<div class="abs" style="left:764px;top:180px;width:100px;height:2px;background:#f5c9d2"></div>
<div class="abs" style="left:864px;top:104px;width:101px;height:78px;background:#fff"></div>
<div class="sh" style="left:864px;top:104px;width:101px">April Co<br>10:00 AM-12:45 PM<br>Rehearsal -</div>
<div class="abs" style="left:864px;top:180px;width:101px;height:2px;background:#f2875a"></div>
<div class="abs" style="left:965px;top:104px;width:99px;height:78px;background:#f1f4f9"></div>
<div class="sh" style="left:965px;top:104px;width:99px">April Co<br>02:00 PM-04:00 PM<br>Rehearsal -</div>
<div class="abs" style="left:965px;top:180px;width:99px;height:2px;background:#f2875a"></div>
<div class="abs" style="left:1064px;top:104px;width:100px;height:78px;background:#fff"></div>
<div class="sh" style="left:1064px;top:104px;width:100px">April Co<br>10:00 AM-12:45 PM<br>Rehearsal -</div>
<div class="abs" style="left:1064px;top:180px;width:100px;height:2px;background:#f2875a"></div>
<div class="abs" style="left:1164px;top:104px;width:101px;height:78px;background:#f1f4f9"></div>
<div class="sh" style="left:1164px;top:104px;width:101px">April Co<br>02:00 PM-04:00 PM<br>Rehearsal -</div>
<div class="abs" style="left:1164px;top:180px;width:101px;height:2px;background:#f2875a"></div>
<div class="abs" style="left:1265px;top:104px;width:100px;height:78px;background:#fff"></div>
<div class="sh" style="left:1265px;top:104px;width:100px">April Co<br>07:00 PM-09:00 PM<br>PERF - Main</div>
<div class="abs" style="left:1365px;top:104px;width:100px;height:78px;background:#f1f4f9"></div>
<div class="sh" style="left:1365px;top:104px;width:100px">April Co<br>07:00 PM-09:00 PM<br>PERF - Main</div>
<div class="abs" style="left:494px;top:180px;width:28px;height:2px;background:#f5f53a"></div>
<div class="abs" style="left:595px;top:180px;width:28px;height:2px;background:#ff0000"></div>
<div class="abs" style="left:463px;top:182px;width:1003px;height:1px;background:#8a8a8a"></div>
<div class="abs" style="left:463px;top:183px;width:1003px;height:505px;background:#f6f8f8"></div>
<div class="abs" style="left:463px;top:203px;width:1003px;height:1px;background:#a2a2a2"></div>
<div class="abs" style="left:463px;top:224px;width:1003px;height:1px;background:#a2a2a2"></div>
<div class="abs" style="left:463px;top:225px;width:1003px;height:15px;background:#e9e9f7"></div>
<div class="abs" style="left:463px;top:240px;width:1003px;height:1px;background:#a2a2a2"></div>
<div class="abs" style="left:463px;top:261px;width:1003px;height:1px;background:#a2a2a2"></div>
<div class="abs" style="left:463px;top:282px;width:1003px;height:1px;background:#a2a2a2"></div>
<div class="abs" style="left:463px;top:283px;width:1003px;height:16px;background:#e9e9f7"></div>
<div class="abs" style="left:463px;top:299px;width:1003px;height:1px;background:#a2a2a2"></div>
<div class="abs" style="left:463px;top:320px;width:1003px;height:1px;background:#a2a2a2"></div>
<div class="abs" style="left:463px;top:321px;width:1003px;height:15px;background:#e9e9f7"></div>
<div class="abs" style="left:463px;top:336px;width:1003px;height:1px;background:#a2a2a2"></div>
<div class="abs" style="left:463px;top:357px;width:1003px;height:1px;background:#a2a2a2"></div>
<div class="abs" style="left:463px;top:378px;width:1003px;height:1px;background:#a2a2a2"></div>
<div class="abs" style="left:463px;top:379px;width:1003px;height:16px;background:#e9e9f7"></div>
<div class="abs" style="left:463px;top:395px;width:1003px;height:1px;background:#a2a2a2"></div>
<div class="abs" style="left:463px;top:416px;width:1003px;height:1px;background:#a2a2a2"></div>
<div class="abs" style="left:463px;top:417px;width:1003px;height:15px;background:#e9e9f7"></div>
<div class="abs" style="left:463px;top:432px;width:1003px;height:1px;background:#a2a2a2"></div>
<div class="abs" style="left:463px;top:454px;width:1003px;height:1px;background:#a2a2a2"></div>
<div class="abs" style="left:463px;top:455px;width:1003px;height:15px;background:#e9e9f7"></div>
<div class="abs" style="left:463px;top:470px;width:1003px;height:1px;background:#a2a2a2"></div>
<div class="abs" style="left:463px;top:491px;width:1003px;height:1px;background:#a2a2a2"></div>
<div class="abs" style="left:463px;top:492px;width:1003px;height:16px;background:#e9e9f7"></div>
<div class="abs" style="left:463px;top:508px;width:1003px;height:1px;background:#a2a2a2"></div>
<div class="abs" style="left:463px;top:529px;width:1003px;height:1px;background:#a2a2a2"></div>
<div class="abs" style="left:463px;top:550px;width:1003px;height:1px;background:#a2a2a2"></div>
<div class="abs" style="left:463px;top:570px;width:1003px;height:1px;background:#a2a2a2"></div>
<div class="abs" style="left:463px;top:591px;width:1003px;height:1px;background:#a2a2a2"></div>
<div class="abs" style="left:463px;top:612px;width:1003px;height:1px;background:#a2a2a2"></div>
<div class="abs" style="left:463px;top:613px;width:1003px;height:16px;background:#e9e9f7"></div>
<div class="abs" style="left:463px;top:629px;width:1003px;height:1px;background:#a2a2a2"></div>
<div class="abs" style="left:463px;top:650px;width:1003px;height:1px;background:#a2a2a2"></div>
<div class="abs" style="left:463px;top:671px;width:1003px;height:1px;background:#a2a2a2"></div>
<div class="abs" style="left:463px;top:692px;width:1003px;height:1px;background:#a2a2a2"></div>
<div class="abs" style="left:463px;top:72px;width:1px;height:616px;background:#a0a0a0"></div>
<div class="abs" style="left:564px;top:104px;width:1px;height:584px;background:#8a8a8a"></div>
<div class="abs" style="left:664px;top:73px;width:1px;height:615px;background:#8a8a8a"></div>
<div class="abs" style="left:764px;top:104px;width:1px;height:584px;background:#8a8a8a"></div>
<div class="abs" style="left:864px;top:73px;width:1px;height:615px;background:#8a8a8a"></div>
<div class="abs" style="left:965px;top:104px;width:1px;height:584px;background:#8a8a8a"></div>
<div class="abs" style="left:1064px;top:73px;width:1px;height:615px;background:#8a8a8a"></div>
<div class="abs" style="left:1164px;top:104px;width:1px;height:584px;background:#8a8a8a"></div>
<div class="abs" style="left:1265px;top:73px;width:1px;height:615px;background:#8a8a8a"></div>
<div class="abs" style="left:1365px;top:73px;width:1px;height:615px;background:#8a8a8a"></div>
<div class="abs" style="left:1465px;top:73px;width:1px;height:615px;background:#8a8a8a"></div>
<svg class="abs" style="left:0;top:0" width="1582" height="688" viewBox="0 0 1582 688"><defs><linearGradient id="gg" x1="0" y1="0" x2="0" y2="1"><stop offset="0" stop-color="#a6eea6"/><stop offset="0.45" stop-color="#5ad65a"/><stop offset="0.8" stop-color="#1cb01c"/><stop offset="1" stop-color="#009400"/></linearGradient><linearGradient id="fg" x1="0" y1="0" x2="0" y2="1"><stop offset="0" stop-color="#eeeeee"/><stop offset="1" stop-color="#c9c9c9"/></linearGradient><symbol id="chk" viewBox="0 0 14 11" width="14" height="11"><path d="M0.3 5.6 L2.3 3.2 L5.2 5.6 L10.9 0.2 L13.4 2.5 L5.2 10.3 Z" fill="url(#gg)" stroke="#3cb83c" stroke-width="0.35"/></symbol><symbol id="fchk" viewBox="0 0 14 11" width="14" height="11"><path d="M0.3 5.6 L2.3 3.2 L5.2 5.6 L10.9 0.2 L13.4 2.5 L5.2 10.3 Z" fill="url(#fg)" stroke="#d0d0d0" stroke-width="0.35"/></symbol><symbol id="stk" viewBox="0 0 12 12" width="12" height="12"><rect x="0.5" y="0.5" width="8" height="8" rx="1" fill="#eef2f8" stroke="#b8c8e0"/><rect x="2.5" y="2.5" width="8" height="8" rx="1" fill="#f4f6fa" stroke="#a9bcdc"/><rect x="4" y="4" width="7.5" height="7.5" rx="1" fill="#fff" stroke="#7e9acb"/></symbol></defs><rect x="494.80" y="183.5" width="27.6" height="19.8" rx="3" fill="#f7f738"/><use href="#chk" x="501.70" y="188.5"/><use href="#chk" x="601.85" y="188.5"/><use href="#chk" x="702.00" y="188.5"/><use href="#chk" x="802.15" y="188.5"/><use href="#chk" x="902.30" y="188.5"/><use href="#chk" x="1002.45" y="188.5"/><use href="#chk" x="1102.60" y="188.5"/><use href="#chk" x="1202.75" y="188.5"/><use href="#chk" x="1302.90" y="188.5"/><use href="#chk" x="1403.05" y="188.5"/><use href="#chk" x="501.70" y="209.5"/><rect x="594.95" y="204.5" width="27.6" height="19.8" rx="3" fill="#ff0000"/><use href="#chk" x="601.85" y="209.5"/><rect x="695.10" y="204.5" width="27.6" height="19.8" rx="3" fill="#ff0000"/><use href="#chk" x="702.00" y="209.5"/><rect x="795.25" y="204.5" width="27.6" height="19.8" rx="3" fill="#ff0000"/><use href="#chk" x="802.15" y="209.5"/><rect x="895.40" y="204.5" width="27.6" height="19.8" rx="3" fill="#ff0000"/><use href="#chk" x="902.30" y="209.5"/><rect x="995.55" y="204.5" width="27.6" height="19.8" rx="3" fill="#ff0000"/><use href="#chk" x="1002.45" y="209.5"/><rect x="1095.70" y="204.5" width="27.6" height="19.8" rx="3" fill="#ff0000"/><use href="#chk" x="1102.60" y="209.5"/><rect x="1195.85" y="204.5" width="27.6" height="19.8" rx="3" fill="#ff0000"/><use href="#chk" x="1202.75" y="209.5"/><rect x="1296.00" y="204.5" width="27.6" height="19.8" rx="3" fill="#ff0000"/><use href="#chk" x="1302.90" y="209.5"/><rect x="1396.15" y="204.5" width="27.6" height="19.8" rx="3" fill="#ff0000"/><use href="#chk" x="1403.05" y="209.5"/><use href="#stk" x="488.8" y="227.0"/><path d="M494.3 234.0 L496.1 236.5 L499.3 232.0" stroke="#1aa01a" stroke-width="1.6" fill="none"/><use href="#stk" x="504.8" y="227.0"/><rect x="509.8" y="235.0" width="5" height="1.5" fill="#e8453c"/><text x="520.8" y="236.6" font-size="10" fill="#222" font-family="Liberation Sans">2 / 1</text><use href="#stk" x="588.9" y="227.0"/><path d="M594.4 234.0 L596.2 236.5 L599.4 232.0" stroke="#1aa01a" stroke-width="1.6" fill="none"/><use href="#stk" x="604.9" y="227.0"/><rect x="609.9" y="235.0" width="5" height="1.5" fill="#e8453c"/><text x="620.9" y="236.6" font-size="10" fill="#222" font-family="Liberation Sans">2 / 2</text><use href="#stk" x="689.1" y="227.0"/><path d="M694.6 234.0 L696.4 236.5 L699.6 232.0" stroke="#1aa01a" stroke-width="1.6" fill="none"/><use href="#stk" x="705.1" y="227.0"/><rect x="710.1" y="235.0" width="5" height="1.5" fill="#e8453c"/><text x="721.1" y="236.6" font-size="10" fill="#222" font-family="Liberation Sans">2 / 2</text><use href="#stk" x="789.2" y="227.0"/><path d="M794.7 234.0 L796.5 236.5 L799.7 232.0" stroke="#1aa01a" stroke-width="1.6" fill="none"/><use href="#stk" x="805.2" y="227.0"/><rect x="810.2" y="235.0" width="5" height="1.5" fill="#e8453c"/><text x="821.2" y="236.6" font-size="10" fill="#222" font-family="Liberation Sans">2 / 2</text><use href="#stk" x="889.4" y="227.0"/><path d="M894.9 234.0 L896.7 236.5 L899.9 232.0" stroke="#1aa01a" stroke-width="1.6" fill="none"/><use href="#stk" x="905.4" y="227.0"/><rect x="910.4" y="235.0" width="5" height="1.5" fill="#e8453c"/><text x="921.4" y="236.6" font-size="10" fill="#222" font-family="Liberation Sans">2 / 2</text><use href="#stk" x="989.5" y="227.0"/><path d="M995.0 234.0 L996.8 236.5 L1000.0 232.0" stroke="#1aa01a" stroke-width="1.6" fill="none"/><use href="#stk" x="1005.5" y="227.0"/><rect x="1010.5" y="235.0" width="5" height="1.5" fill="#e8453c"/><text x="1021.5" y="236.6" font-size="10" fill="#222" font-family="Liberation Sans">2 / 2</text><use href="#stk" x="1089.7" y="227.0"/><path d="M1095.2 234.0 L1097.0 236.5 L1100.2 232.0" stroke="#1aa01a" stroke-width="1.6" fill="none"/><use href="#stk" x="1105.7" y="227.0"/><rect x="1110.7" y="235.0" width="5" height="1.5" fill="#e8453c"/><text x="1121.7" y="236.6" font-size="10" fill="#222" font-family="Liberation Sans">2 / 2</text><use href="#stk" x="1189.8" y="227.0"/><path d="M1195.3 234.0 L1197.1 236.5 L1200.3 232.0" stroke="#1aa01a" stroke-width="1.6" fill="none"/><use href="#stk" x="1205.8" y="227.0"/><rect x="1210.8" y="235.0" width="5" height="1.5" fill="#e8453c"/><text x="1221.8" y="236.6" font-size="10" fill="#222" font-family="Liberation Sans">2 / 2</text><use href="#stk" x="1290.0" y="227.0"/><path d="M1295.5 234.0 L1297.3 236.5 L1300.5 232.0" stroke="#1aa01a" stroke-width="1.6" fill="none"/><use href="#stk" x="1306.0" y="227.0"/><rect x="1311.0" y="235.0" width="5" height="1.5" fill="#e8453c"/><text x="1322.0" y="236.6" font-size="10" fill="#222" font-family="Liberation Sans">2 / 2</text><use href="#stk" x="1390.1" y="227.0"/><path d="M1395.6 234.0 L1397.4 236.5 L1400.6 232.0" stroke="#1aa01a" stroke-width="1.6" fill="none"/><use href="#stk" x="1406.1" y="227.0"/><rect x="1411.1" y="235.0" width="5" height="1.5" fill="#e8453c"/><text x="1422.1" y="236.6" font-size="10" fill="#222" font-family="Liberation Sans">2 / 2</text><rect x="494.80" y="241.5" width="27.6" height="19.8" rx="3" fill="#9232c8"/><use href="#chk" x="501.70" y="246.5"/><rect x="594.95" y="241.5" width="27.6" height="19.8" rx="3" fill="#9232c8"/><use href="#chk" x="601.85" y="246.5"/><rect x="695.10" y="241.5" width="27.6" height="19.8" rx="3" fill="#9232c8"/><use href="#chk" x="702.00" y="246.5"/><rect x="795.25" y="241.5" width="27.6" height="19.8" rx="3" fill="#9232c8"/><use href="#chk" x="802.15" y="246.5"/><rect x="895.40" y="241.5" width="27.6" height="19.8" rx="3" fill="#9232c8"/><use href="#chk" x="902.30" y="246.5"/><rect x="995.55" y="241.5" width="27.6" height="19.8" rx="3" fill="#9232c8"/><use href="#chk" x="1002.45" y="246.5"/><rect x="1095.70" y="241.5" width="27.6" height="19.8" rx="3" fill="#9232c8"/><use href="#chk" x="1102.60" y="246.5"/><rect x="1195.85" y="241.5" width="27.6" height="19.8" rx="3" fill="#9232c8"/><use href="#chk" x="1202.75" y="246.5"/><rect x="1296.00" y="241.5" width="27.6" height="19.8" rx="3" fill="#9232c8"/><use href="#chk" x="1302.90" y="246.5"/><rect x="1396.15" y="241.5" width="27.6" height="19.8" rx="3" fill="#9232c8"/><use href="#chk" x="1403.05" y="246.5"/><use href="#chk" x="501.70" y="267.5"/><use href="#chk" x="601.85" y="267.5"/><use href="#chk" x="702.00" y="267.5"/><use href="#chk" x="802.15" y="267.5"/><use href="#chk" x="902.30" y="267.5"/><use href="#chk" x="1002.45" y="267.5"/><use href="#chk" x="1102.60" y="267.5"/><use href="#chk" x="1202.75" y="267.5"/><use href="#chk" x="1302.90" y="267.5"/><use href="#chk" x="1403.05" y="267.5"/><use href="#stk" x="488.8" y="285.5"/><path d="M494.3 292.5 L496.1 295.0 L499.3 290.5" stroke="#1aa01a" stroke-width="1.6" fill="none"/><use href="#stk" x="504.8" y="285.5"/><rect x="509.8" y="293.5" width="5" height="1.5" fill="#e8453c"/><text x="520.8" y="295.1" font-size="10" fill="#222" font-family="Liberation Sans">1 / 1</text><use href="#stk" x="588.9" y="285.5"/><path d="M594.4 292.5 L596.2 295.0 L599.4 290.5" stroke="#1aa01a" stroke-width="1.6" fill="none"/><use href="#stk" x="604.9" y="285.5"/><rect x="609.9" y="293.5" width="5" height="1.5" fill="#e8453c"/><text x="620.9" y="295.1" font-size="10" fill="#222" font-family="Liberation Sans">1 / 2</text><use href="#stk" x="689.1" y="285.5"/><path d="M694.6 292.5 L696.4 295.0 L699.6 290.5" stroke="#1aa01a" stroke-width="1.6" fill="none"/><use href="#stk" x="705.1" y="285.5"/><rect x="710.1" y="293.5" width="5" height="1.5" fill="#e8453c"/><text x="721.1" y="295.1" font-size="10" fill="#222" font-family="Liberation Sans">1 / 2</text><use href="#stk" x="789.2" y="285.5"/><path d="M794.7 292.5 L796.5 295.0 L799.7 290.5" stroke="#1aa01a" stroke-width="1.6" fill="none"/><use href="#stk" x="805.2" y="285.5"/><rect x="810.2" y="293.5" width="5" height="1.5" fill="#e8453c"/><text x="821.2" y="295.1" font-size="10" fill="#222" font-family="Liberation Sans">1 / 2</text><use href="#stk" x="889.4" y="285.5"/><path d="M894.9 292.5 L896.7 295.0 L899.9 290.5" stroke="#1aa01a" stroke-width="1.6" fill="none"/><use href="#stk" x="905.4" y="285.5"/><rect x="910.4" y="293.5" width="5" height="1.5" fill="#e8453c"/><text x="921.4" y="295.1" font-size="10" fill="#222" font-family="Liberation Sans">1 / 2</text><use href="#stk" x="989.5" y="285.5"/><path d="M995.0 292.5 L996.8 295.0 L1000.0 290.5" stroke="#1aa01a" stroke-width="1.6" fill="none"/><use href="#stk" x="1005.5" y="285.5"/><rect x="1010.5" y="293.5" width="5" height="1.5" fill="#e8453c"/><text x="1021.5" y="295.1" font-size="10" fill="#222" font-family="Liberation Sans">1 / 2</text><use href="#stk" x="1089.7" y="285.5"/><path d="M1095.2 292.5 L1097.0 295.0 L1100.2 290.5" stroke="#1aa01a" stroke-width="1.6" fill="none"/><use href="#stk" x="1105.7" y="285.5"/><rect x="1110.7" y="293.5" width="5" height="1.5" fill="#e8453c"/><text x="1121.7" y="295.1" font-size="10" fill="#222" font-family="Liberation Sans">1 / 2</text><use href="#stk" x="1189.8" y="285.5"/><path d="M1195.3 292.5 L1197.1 295.0 L1200.3 290.5" stroke="#1aa01a" stroke-width="1.6" fill="none"/><use href="#stk" x="1205.8" y="285.5"/><rect x="1210.8" y="293.5" width="5" height="1.5" fill="#e8453c"/><text x="1221.8" y="295.1" font-size="10" fill="#222" font-family="Liberation Sans">1 / 2</text><use href="#stk" x="1290.0" y="285.5"/><path d="M1295.5 292.5 L1297.3 295.0 L1300.5 290.5" stroke="#1aa01a" stroke-width="1.6" fill="none"/><use href="#stk" x="1306.0" y="285.5"/><rect x="1311.0" y="293.5" width="5" height="1.5" fill="#e8453c"/><text x="1322.0" y="295.1" font-size="10" fill="#222" font-family="Liberation Sans">1 / 2</text><use href="#stk" x="1390.1" y="285.5"/><path d="M1395.6 292.5 L1397.4 295.0 L1400.6 290.5" stroke="#1aa01a" stroke-width="1.6" fill="none"/><use href="#stk" x="1406.1" y="285.5"/><rect x="1411.1" y="293.5" width="5" height="1.5" fill="#e8453c"/><text x="1422.1" y="295.1" font-size="10" fill="#222" font-family="Liberation Sans">1 / 2</text><use href="#chk" x="501.70" y="305.5"/><use href="#chk" x="601.85" y="305.5"/><use href="#chk" x="702.00" y="305.5"/><use href="#chk" x="802.15" y="305.5"/><use href="#chk" x="902.30" y="305.5"/><use href="#chk" x="1002.45" y="305.5"/><use href="#chk" x="1102.60" y="305.5"/><use href="#chk" x="1202.75" y="305.5"/><use href="#chk" x="1302.90" y="305.5"/><use href="#chk" x="1403.05" y="305.5"/><use href="#stk" x="488.8" y="323.0"/><path d="M494.3 330.0 L496.1 332.5 L499.3 328.0" stroke="#1aa01a" stroke-width="1.6" fill="none"/><use href="#stk" x="504.8" y="323.0"/><rect x="509.8" y="331.0" width="5" height="1.5" fill="#e8453c"/><text x="520.8" y="332.6" font-size="10" fill="#222" font-family="Liberation Sans">2 / 1</text><use href="#stk" x="588.9" y="323.0"/><path d="M594.4 330.0 L596.2 332.5 L599.4 328.0" stroke="#1aa01a" stroke-width="1.6" fill="none"/><use href="#stk" x="604.9" y="323.0"/><rect x="609.9" y="331.0" width="5" height="1.5" fill="#e8453c"/><text x="620.9" y="332.6" font-size="10" fill="#222" font-family="Liberation Sans">2 / 2</text><use href="#stk" x="689.1" y="323.0"/><path d="M694.6 330.0 L696.4 332.5 L699.6 328.0" stroke="#1aa01a" stroke-width="1.6" fill="none"/><use href="#stk" x="705.1" y="323.0"/><rect x="710.1" y="331.0" width="5" height="1.5" fill="#e8453c"/><text x="721.1" y="332.6" font-size="10" fill="#222" font-family="Liberation Sans">2 / 2</text><use href="#stk" x="789.2" y="323.0"/><path d="M794.7 330.0 L796.5 332.5 L799.7 328.0" stroke="#1aa01a" stroke-width="1.6" fill="none"/><use href="#stk" x="805.2" y="323.0"/><rect x="810.2" y="331.0" width="5" height="1.5" fill="#e8453c"/><text x="821.2" y="332.6" font-size="10" fill="#222" font-family="Liberation Sans">2 / 2</text><use href="#stk" x="889.4" y="323.0"/><path d="M894.9 330.0 L896.7 332.5 L899.9 328.0" stroke="#1aa01a" stroke-width="1.6" fill="none"/><use href="#stk" x="905.4" y="323.0"/><rect x="910.4" y="331.0" width="5" height="1.5" fill="#e8453c"/><text x="921.4" y="332.6" font-size="10" fill="#222" font-family="Liberation Sans">2 / 2</text><use href="#stk" x="989.5" y="323.0"/><path d="M995.0 330.0 L996.8 332.5 L1000.0 328.0" stroke="#1aa01a" stroke-width="1.6" fill="none"/><use href="#stk" x="1005.5" y="323.0"/><rect x="1010.5" y="331.0" width="5" height="1.5" fill="#e8453c"/><text x="1021.5" y="332.6" font-size="10" fill="#222" font-family="Liberation Sans">2 / 2</text><use href="#stk" x="1089.7" y="323.0"/><path d="M1095.2 330.0 L1097.0 332.5 L1100.2 328.0" stroke="#1aa01a" stroke-width="1.6" fill="none"/><use href="#stk" x="1105.7" y="323.0"/><rect x="1110.7" y="331.0" width="5" height="1.5" fill="#e8453c"/><text x="1121.7" y="332.6" font-size="10" fill="#222" font-family="Liberation Sans">2 / 2</text><use href="#stk" x="1189.8" y="323.0"/><path d="M1195.3 330.0 L1197.1 332.5 L1200.3 328.0" stroke="#1aa01a" stroke-width="1.6" fill="none"/><use href="#stk" x="1205.8" y="323.0"/><rect x="1210.8" y="331.0" width="5" height="1.5" fill="#e8453c"/><text x="1221.8" y="332.6" font-size="10" fill="#222" font-family="Liberation Sans">2 / 2</text><use href="#stk" x="1290.0" y="323.0"/><path d="M1295.5 330.0 L1297.3 332.5 L1300.5 328.0" stroke="#1aa01a" stroke-width="1.6" fill="none"/><use href="#stk" x="1306.0" y="323.0"/><rect x="1311.0" y="331.0" width="5" height="1.5" fill="#e8453c"/><text x="1322.0" y="332.6" font-size="10" fill="#222" font-family="Liberation Sans">2 / 2</text><use href="#stk" x="1390.1" y="323.0"/><path d="M1395.6 330.0 L1397.4 332.5 L1400.6 328.0" stroke="#1aa01a" stroke-width="1.6" fill="none"/><use href="#stk" x="1406.1" y="323.0"/><rect x="1411.1" y="331.0" width="5" height="1.5" fill="#e8453c"/><text x="1422.1" y="332.6" font-size="10" fill="#222" font-family="Liberation Sans">2 / 2</text><use href="#chk" x="501.70" y="342.5"/><use href="#chk" x="601.85" y="342.5"/><use href="#chk" x="702.00" y="342.5"/><use href="#chk" x="802.15" y="342.5"/><use href="#chk" x="902.30" y="342.5"/><use href="#chk" x="1002.45" y="342.5"/><use href="#chk" x="1102.60" y="342.5"/><use href="#chk" x="1202.75" y="342.5"/><use href="#chk" x="1302.90" y="342.5"/><use href="#chk" x="1403.05" y="342.5"/><use href="#chk" x="501.70" y="363.5"/><use href="#chk" x="601.85" y="363.5"/><use href="#chk" x="702.00" y="363.5"/><use href="#chk" x="802.15" y="363.5"/><use href="#chk" x="902.30" y="363.5"/><use href="#chk" x="1002.45" y="363.5"/><use href="#chk" x="1102.60" y="363.5"/><use href="#chk" x="1202.75" y="363.5"/><use href="#chk" x="1302.90" y="363.5"/><use href="#chk" x="1403.05" y="363.5"/><use href="#stk" x="488.8" y="381.5"/><path d="M494.3 388.5 L496.1 391.0 L499.3 386.5" stroke="#1aa01a" stroke-width="1.6" fill="none"/><use href="#stk" x="504.8" y="381.5"/><rect x="509.8" y="389.5" width="5" height="1.5" fill="#e8453c"/><text x="520.8" y="391.1" font-size="10" fill="#222" font-family="Liberation Sans">1 / 2</text><use href="#stk" x="588.9" y="381.5"/><path d="M594.4 388.5 L596.2 391.0 L599.4 386.5" stroke="#1aa01a" stroke-width="1.6" fill="none"/><use href="#stk" x="604.9" y="381.5"/><rect x="609.9" y="389.5" width="5" height="1.5" fill="#e8453c"/><text x="620.9" y="391.1" font-size="10" fill="#222" font-family="Liberation Sans">1 / 2</text><use href="#stk" x="689.1" y="381.5"/><path d="M694.6 388.5 L696.4 391.0 L699.6 386.5" stroke="#1aa01a" stroke-width="1.6" fill="none"/><use href="#stk" x="705.1" y="381.5"/><rect x="710.1" y="389.5" width="5" height="1.5" fill="#e8453c"/><text x="721.1" y="391.1" font-size="10" fill="#222" font-family="Liberation Sans">1 / 2</text><use href="#stk" x="789.2" y="381.5"/><path d="M794.7 388.5 L796.5 391.0 L799.7 386.5" stroke="#1aa01a" stroke-width="1.6" fill="none"/><use href="#stk" x="805.2" y="381.5"/><rect x="810.2" y="389.5" width="5" height="1.5" fill="#e8453c"/><text x="821.2" y="391.1" font-size="10" fill="#222" font-family="Liberation Sans">1 / 2</text><use href="#stk" x="889.4" y="381.5"/><path d="M894.9 388.5 L896.7 391.0 L899.9 386.5" stroke="#1aa01a" stroke-width="1.6" fill="none"/><use href="#stk" x="905.4" y="381.5"/><rect x="910.4" y="389.5" width="5" height="1.5" fill="#e8453c"/><text x="921.4" y="391.1" font-size="10" fill="#222" font-family="Liberation Sans">1 / 2</text><use href="#stk" x="989.5" y="381.5"/><path d="M995.0 388.5 L996.8 391.0 L1000.0 386.5" stroke="#1aa01a" stroke-width="1.6" fill="none"/><use href="#stk" x="1005.5" y="381.5"/><rect x="1010.5" y="389.5" width="5" height="1.5" fill="#e8453c"/><text x="1021.5" y="391.1" font-size="10" fill="#222" font-family="Liberation Sans">1 / 2</text><use href="#stk" x="1089.7" y="381.5"/><path d="M1095.2 388.5 L1097.0 391.0 L1100.2 386.5" stroke="#1aa01a" stroke-width="1.6" fill="none"/><use href="#stk" x="1105.7" y="381.5"/><rect x="1110.7" y="389.5" width="5" height="1.5" fill="#e8453c"/><text x="1121.7" y="391.1" font-size="10" fill="#222" font-family="Liberation Sans">1 / 2</text><use href="#stk" x="1189.8" y="381.5"/><path d="M1195.3 388.5 L1197.1 391.0 L1200.3 386.5" stroke="#1aa01a" stroke-width="1.6" fill="none"/><use href="#stk" x="1205.8" y="381.5"/><rect x="1210.8" y="389.5" width="5" height="1.5" fill="#e8453c"/><text x="1221.8" y="391.1" font-size="10" fill="#222" font-family="Liberation Sans">1 / 2</text><use href="#stk" x="1290.0" y="381.5"/><path d="M1295.5 388.5 L1297.3 391.0 L1300.5 386.5" stroke="#1aa01a" stroke-width="1.6" fill="none"/><use href="#stk" x="1306.0" y="381.5"/><rect x="1311.0" y="389.5" width="5" height="1.5" fill="#e8453c"/><text x="1322.0" y="391.1" font-size="10" fill="#222" font-family="Liberation Sans">1 / 2</text><use href="#stk" x="1390.1" y="381.5"/><path d="M1395.6 388.5 L1397.4 391.0 L1400.6 386.5" stroke="#1aa01a" stroke-width="1.6" fill="none"/><use href="#stk" x="1406.1" y="381.5"/><rect x="1411.1" y="389.5" width="5" height="1.5" fill="#e8453c"/><text x="1422.1" y="391.1" font-size="10" fill="#222" font-family="Liberation Sans">1 / 2</text><use href="#chk" x="501.70" y="401.5"/><use href="#chk" x="601.85" y="401.5"/><use href="#chk" x="702.00" y="401.5"/><use href="#chk" x="802.15" y="401.5"/><use href="#chk" x="902.30" y="401.5"/><use href="#chk" x="1002.45" y="401.5"/><use href="#chk" x="1102.60" y="401.5"/><use href="#chk" x="1202.75" y="401.5"/><use href="#chk" x="1302.90" y="401.5"/><use href="#chk" x="1403.05" y="401.5"/><use href="#stk" x="488.8" y="419.0"/><path d="M494.3 426.0 L496.1 428.5 L499.3 424.0" stroke="#1aa01a" stroke-width="1.6" fill="none"/><use href="#stk" x="504.8" y="419.0"/><rect x="509.8" y="427.0" width="5" height="1.5" fill="#e8453c"/><text x="520.8" y="428.6" font-size="10" fill="#222" font-family="Liberation Sans">1 / 2</text><use href="#stk" x="588.9" y="419.0"/><path d="M594.4 426.0 L596.2 428.5 L599.4 424.0" stroke="#1aa01a" stroke-width="1.6" fill="none"/><use href="#stk" x="604.9" y="419.0"/><rect x="609.9" y="427.0" width="5" height="1.5" fill="#e8453c"/><text x="620.9" y="428.6" font-size="10" fill="#222" font-family="Liberation Sans">1 / 2</text><use href="#stk" x="689.1" y="419.0"/><path d="M694.6 426.0 L696.4 428.5 L699.6 424.0" stroke="#1aa01a" stroke-width="1.6" fill="none"/><use href="#stk" x="705.1" y="419.0"/><rect x="710.1" y="427.0" width="5" height="1.5" fill="#e8453c"/><text x="721.1" y="428.6" font-size="10" fill="#222" font-family="Liberation Sans">1 / 2</text><use href="#stk" x="789.2" y="419.0"/><path d="M794.7 426.0 L796.5 428.5 L799.7 424.0" stroke="#1aa01a" stroke-width="1.6" fill="none"/><use href="#stk" x="805.2" y="419.0"/><rect x="810.2" y="427.0" width="5" height="1.5" fill="#e8453c"/><text x="821.2" y="428.6" font-size="10" fill="#222" font-family="Liberation Sans">1 / 2</text><use href="#stk" x="889.4" y="419.0"/><path d="M894.9 426.0 L896.7 428.5 L899.9 424.0" stroke="#1aa01a" stroke-width="1.6" fill="none"/><use href="#stk" x="905.4" y="419.0"/><rect x="910.4" y="427.0" width="5" height="1.5" fill="#e8453c"/><text x="921.4" y="428.6" font-size="10" fill="#222" font-family="Liberation Sans">1 / 2</text><use href="#stk" x="989.5" y="419.0"/><path d="M995.0 426.0 L996.8 428.5 L1000.0 424.0" stroke="#1aa01a" stroke-width="1.6" fill="none"/><use href="#stk" x="1005.5" y="419.0"/><rect x="1010.5" y="427.0" width="5" height="1.5" fill="#e8453c"/><text x="1021.5" y="428.6" font-size="10" fill="#222" font-family="Liberation Sans">1 / 2</text><use href="#stk" x="1089.7" y="419.0"/><path d="M1095.2 426.0 L1097.0 428.5 L1100.2 424.0" stroke="#1aa01a" stroke-width="1.6" fill="none"/><use href="#stk" x="1105.7" y="419.0"/><rect x="1110.7" y="427.0" width="5" height="1.5" fill="#e8453c"/><text x="1121.7" y="428.6" font-size="10" fill="#222" font-family="Liberation Sans">1 / 2</text><use href="#stk" x="1189.8" y="419.0"/><path d="M1195.3 426.0 L1197.1 428.5 L1200.3 424.0" stroke="#1aa01a" stroke-width="1.6" fill="none"/><use href="#stk" x="1205.8" y="419.0"/><rect x="1210.8" y="427.0" width="5" height="1.5" fill="#e8453c"/><text x="1221.8" y="428.6" font-size="10" fill="#222" font-family="Liberation Sans">1 / 2</text><use href="#stk" x="1290.0" y="419.0"/><path d="M1295.5 426.0 L1297.3 428.5 L1300.5 424.0" stroke="#1aa01a" stroke-width="1.6" fill="none"/><use href="#stk" x="1306.0" y="419.0"/><rect x="1311.0" y="427.0" width="5" height="1.5" fill="#e8453c"/><text x="1322.0" y="428.6" font-size="10" fill="#222" font-family="Liberation Sans">1 / 2</text><use href="#stk" x="1390.1" y="419.0"/><path d="M1395.6 426.0 L1397.4 428.5 L1400.6 424.0" stroke="#1aa01a" stroke-width="1.6" fill="none"/><use href="#stk" x="1406.1" y="419.0"/><rect x="1411.1" y="427.0" width="5" height="1.5" fill="#e8453c"/><text x="1422.1" y="428.6" font-size="10" fill="#222" font-family="Liberation Sans">1 / 2</text><use href="#chk" x="501.70" y="439.0"/><use href="#chk" x="601.85" y="439.0"/><use href="#chk" x="702.00" y="439.0"/><use href="#chk" x="802.15" y="439.0"/><use href="#chk" x="902.30" y="439.0"/><use href="#chk" x="1002.45" y="439.0"/><use href="#chk" x="1102.60" y="439.0"/><use href="#chk" x="1202.75" y="439.0"/><use href="#chk" x="1302.90" y="439.0"/><use href="#chk" x="1403.05" y="439.0"/><use href="#stk" x="488.8" y="457.0"/><path d="M494.3 464.0 L496.1 466.5 L499.3 462.0" stroke="#1aa01a" stroke-width="1.6" fill="none"/><use href="#stk" x="504.8" y="457.0"/><rect x="509.8" y="465.0" width="5" height="1.5" fill="#e8453c"/><text x="520.8" y="466.6" font-size="10" fill="#222" font-family="Liberation Sans">1 / 1</text><use href="#stk" x="588.9" y="457.0"/><path d="M594.4 464.0 L596.2 466.5 L599.4 462.0" stroke="#1aa01a" stroke-width="1.6" fill="none"/><use href="#stk" x="604.9" y="457.0"/><rect x="609.9" y="465.0" width="5" height="1.5" fill="#e8453c"/><text x="620.9" y="466.6" font-size="10" fill="#222" font-family="Liberation Sans">1 / 1</text><use href="#stk" x="689.1" y="457.0"/><path d="M694.6 464.0 L696.4 466.5 L699.6 462.0" stroke="#1aa01a" stroke-width="1.6" fill="none"/><use href="#stk" x="705.1" y="457.0"/><rect x="710.1" y="465.0" width="5" height="1.5" fill="#e8453c"/><text x="721.1" y="466.6" font-size="10" fill="#222" font-family="Liberation Sans">1 / 1</text><use href="#stk" x="789.2" y="457.0"/><path d="M794.7 464.0 L796.5 466.5 L799.7 462.0" stroke="#1aa01a" stroke-width="1.6" fill="none"/><use href="#stk" x="805.2" y="457.0"/><rect x="810.2" y="465.0" width="5" height="1.5" fill="#e8453c"/><text x="821.2" y="466.6" font-size="10" fill="#222" font-family="Liberation Sans">1 / 1</text><use href="#stk" x="889.4" y="457.0"/><path d="M894.9 464.0 L896.7 466.5 L899.9 462.0" stroke="#1aa01a" stroke-width="1.6" fill="none"/><use href="#stk" x="905.4" y="457.0"/><rect x="910.4" y="465.0" width="5" height="1.5" fill="#e8453c"/><text x="921.4" y="466.6" font-size="10" fill="#222" font-family="Liberation Sans">1 / 1</text><use href="#stk" x="989.5" y="457.0"/><path d="M995.0 464.0 L996.8 466.5 L1000.0 462.0" stroke="#1aa01a" stroke-width="1.6" fill="none"/><use href="#stk" x="1005.5" y="457.0"/><rect x="1010.5" y="465.0" width="5" height="1.5" fill="#e8453c"/><text x="1021.5" y="466.6" font-size="10" fill="#222" font-family="Liberation Sans">1 / 1</text><use href="#stk" x="1089.7" y="457.0"/><path d="M1095.2 464.0 L1097.0 466.5 L1100.2 462.0" stroke="#1aa01a" stroke-width="1.6" fill="none"/><use href="#stk" x="1105.7" y="457.0"/><rect x="1110.7" y="465.0" width="5" height="1.5" fill="#e8453c"/><text x="1121.7" y="466.6" font-size="10" fill="#222" font-family="Liberation Sans">1 / 1</text><use href="#stk" x="1189.8" y="457.0"/><path d="M1195.3 464.0 L1197.1 466.5 L1200.3 462.0" stroke="#1aa01a" stroke-width="1.6" fill="none"/><use href="#stk" x="1205.8" y="457.0"/><rect x="1210.8" y="465.0" width="5" height="1.5" fill="#e8453c"/><text x="1221.8" y="466.6" font-size="10" fill="#222" font-family="Liberation Sans">1 / 1</text><use href="#stk" x="1290.0" y="457.0"/><path d="M1295.5 464.0 L1297.3 466.5 L1300.5 462.0" stroke="#1aa01a" stroke-width="1.6" fill="none"/><use href="#stk" x="1306.0" y="457.0"/><rect x="1311.0" y="465.0" width="5" height="1.5" fill="#e8453c"/><text x="1322.0" y="466.6" font-size="10" fill="#222" font-family="Liberation Sans">1 / 1</text><use href="#stk" x="1390.1" y="457.0"/><path d="M1395.6 464.0 L1397.4 466.5 L1400.6 462.0" stroke="#1aa01a" stroke-width="1.6" fill="none"/><use href="#stk" x="1406.1" y="457.0"/><rect x="1411.1" y="465.0" width="5" height="1.5" fill="#e8453c"/><text x="1422.1" y="466.6" font-size="10" fill="#222" font-family="Liberation Sans">1 / 1</text><use href="#chk" x="501.70" y="476.5"/><use href="#chk" x="601.85" y="476.5"/><use href="#chk" x="702.00" y="476.5"/><use href="#chk" x="802.15" y="476.5"/><use href="#chk" x="902.30" y="476.5"/><use href="#chk" x="1002.45" y="476.5"/><use href="#chk" x="1102.60" y="476.5"/><use href="#chk" x="1202.75" y="476.5"/><use href="#chk" x="1302.90" y="476.5"/><use href="#chk" x="1403.05" y="476.5"/><use href="#stk" x="486.0" y="494.5"/><path d="M491.5 501.5 L493.3 504.0 L496.5 499.5" stroke="#1aa01a" stroke-width="1.6" fill="none"/><use href="#stk" x="502.0" y="494.5"/><rect x="507.0" y="502.5" width="5" height="1.5" fill="#e8453c"/><text x="518.0" y="504.1" font-size="10" fill="#222" font-family="Liberation Sans">5 / 11</text><use href="#stk" x="586.1" y="494.5"/><path d="M591.6 501.5 L593.4 504.0 L596.6 499.5" stroke="#1aa01a" stroke-width="1.6" fill="none"/><use href="#stk" x="602.1" y="494.5"/><rect x="607.1" y="502.5" width="5" height="1.5" fill="#e8453c"/><text x="618.1" y="504.1" font-size="10" fill="#222" font-family="Liberation Sans">3 / 11</text><use href="#stk" x="686.3" y="494.5"/><path d="M691.8 501.5 L693.6 504.0 L696.8 499.5" stroke="#1aa01a" stroke-width="1.6" fill="none"/><use href="#stk" x="702.3" y="494.5"/><rect x="707.3" y="502.5" width="5" height="1.5" fill="#e8453c"/><text x="718.3" y="504.1" font-size="10" fill="#222" font-family="Liberation Sans">3 / 11</text><use href="#stk" x="786.5" y="494.5"/><path d="M792.0 501.5 L793.8 504.0 L797.0 499.5" stroke="#1aa01a" stroke-width="1.6" fill="none"/><use href="#stk" x="802.5" y="494.5"/><rect x="807.5" y="502.5" width="5" height="1.5" fill="#e8453c"/><text x="818.5" y="504.1" font-size="10" fill="#222" font-family="Liberation Sans">3 / 11</text><use href="#stk" x="886.6" y="494.5"/><path d="M892.1 501.5 L893.9 504.0 L897.1 499.5" stroke="#1aa01a" stroke-width="1.6" fill="none"/><use href="#stk" x="902.6" y="494.5"/><rect x="907.6" y="502.5" width="5" height="1.5" fill="#e8453c"/><text x="918.6" y="504.1" font-size="10" fill="#222" font-family="Liberation Sans">3 / 11</text><use href="#stk" x="986.8" y="494.5"/><path d="M992.2 501.5 L994.0 504.0 L997.2 499.5" stroke="#1aa01a" stroke-width="1.6" fill="none"/><use href="#stk" x="1002.8" y="494.5"/><rect x="1007.8" y="502.5" width="5" height="1.5" fill="#e8453c"/><text x="1018.8" y="504.1" font-size="10" fill="#222" font-family="Liberation Sans">3 / 11</text><use href="#stk" x="1086.9" y="494.5"/><path d="M1092.4 501.5 L1094.2 504.0 L1097.4 499.5" stroke="#1aa01a" stroke-width="1.6" fill="none"/><use href="#stk" x="1102.9" y="494.5"/><rect x="1107.9" y="502.5" width="5" height="1.5" fill="#e8453c"/><text x="1118.9" y="504.1" font-size="10" fill="#222" font-family="Liberation Sans">3 / 11</text><use href="#stk" x="1187.0" y="494.5"/><path d="M1192.5 501.5 L1194.3 504.0 L1197.5 499.5" stroke="#1aa01a" stroke-width="1.6" fill="none"/><use href="#stk" x="1203.0" y="494.5"/><rect x="1208.0" y="502.5" width="5" height="1.5" fill="#e8453c"/><text x="1219.0" y="504.1" font-size="10" fill="#222" font-family="Liberation Sans">3 / 11</text><use href="#stk" x="1287.2" y="494.5"/><path d="M1292.7 501.5 L1294.5 504.0 L1297.7 499.5" stroke="#1aa01a" stroke-width="1.6" fill="none"/><use href="#stk" x="1303.2" y="494.5"/><rect x="1308.2" y="502.5" width="5" height="1.5" fill="#e8453c"/><text x="1319.2" y="504.1" font-size="10" fill="#222" font-family="Liberation Sans">3 / 11</text><use href="#stk" x="1387.3" y="494.5"/><path d="M1392.8 501.5 L1394.6 504.0 L1397.8 499.5" stroke="#1aa01a" stroke-width="1.6" fill="none"/><use href="#stk" x="1403.3" y="494.5"/><rect x="1408.3" y="502.5" width="5" height="1.5" fill="#e8453c"/><text x="1419.3" y="504.1" font-size="10" fill="#222" font-family="Liberation Sans">3 / 11</text><use href="#chk" x="501.70" y="514.5"/><use href="#fchk" x="601.85" y="514.5"/><use href="#fchk" x="702.00" y="514.5"/><use href="#fchk" x="802.15" y="514.5"/><use href="#fchk" x="902.30" y="514.5"/><use href="#fchk" x="1002.45" y="514.5"/><use href="#fchk" x="1102.60" y="514.5"/><use href="#fchk" x="1202.75" y="514.5"/><use href="#fchk" x="1302.90" y="514.5"/><use href="#fchk" x="1403.05" y="514.5"/><use href="#chk" x="501.70" y="535.5"/><use href="#fchk" x="601.85" y="535.5"/><use href="#fchk" x="702.00" y="535.5"/><use href="#fchk" x="802.15" y="535.5"/><use href="#fchk" x="902.30" y="535.5"/><use href="#fchk" x="1002.45" y="535.5"/><use href="#fchk" x="1102.60" y="535.5"/><use href="#fchk" x="1202.75" y="535.5"/><use href="#fchk" x="1302.90" y="535.5"/><use href="#fchk" x="1403.05" y="535.5"/><use href="#chk" x="501.70" y="556.0"/><use href="#chk" x="601.85" y="556.0"/><use href="#chk" x="702.00" y="556.0"/><use href="#chk" x="802.15" y="556.0"/><use href="#chk" x="902.30" y="556.0"/><use href="#chk" x="1002.45" y="556.0"/><use href="#chk" x="1102.60" y="556.0"/><use href="#chk" x="1202.75" y="556.0"/><use href="#chk" x="1302.90" y="556.0"/><use href="#chk" x="1403.05" y="556.0"/><use href="#chk" x="501.70" y="576.5"/><use href="#chk" x="601.85" y="576.5"/><use href="#chk" x="702.00" y="576.5"/><use href="#chk" x="802.15" y="576.5"/><use href="#chk" x="902.30" y="576.5"/><use href="#chk" x="1002.45" y="576.5"/><use href="#chk" x="1102.60" y="576.5"/><use href="#chk" x="1202.75" y="576.5"/><use href="#chk" x="1302.90" y="576.5"/><use href="#chk" x="1403.05" y="576.5"/><use href="#chk" x="501.70" y="597.5"/><use href="#chk" x="601.85" y="597.5"/><use href="#chk" x="702.00" y="597.5"/><use href="#chk" x="802.15" y="597.5"/><use href="#chk" x="902.30" y="597.5"/><use href="#chk" x="1002.45" y="597.5"/><use href="#chk" x="1102.60" y="597.5"/><use href="#chk" x="1202.75" y="597.5"/><use href="#chk" x="1302.90" y="597.5"/><use href="#chk" x="1403.05" y="597.5"/><use href="#stk" x="488.8" y="615.5"/><path d="M494.3 622.5 L496.1 625.0 L499.3 620.5" stroke="#1aa01a" stroke-width="1.6" fill="none"/><use href="#stk" x="504.8" y="615.5"/><rect x="509.8" y="623.5" width="5" height="1.5" fill="#e8453c"/><text x="520.8" y="625.1" font-size="10" fill="#222" font-family="Liberation Sans">4 / 8</text><use href="#stk" x="588.9" y="615.5"/><path d="M594.4 622.5 L596.2 625.0 L599.4 620.5" stroke="#1aa01a" stroke-width="1.6" fill="none"/><use href="#stk" x="604.9" y="615.5"/><rect x="609.9" y="623.5" width="5" height="1.5" fill="#e8453c"/><text x="620.9" y="625.1" font-size="10" fill="#222" font-family="Liberation Sans">4 / 8</text><use href="#stk" x="689.1" y="615.5"/><path d="M694.6 622.5 L696.4 625.0 L699.6 620.5" stroke="#1aa01a" stroke-width="1.6" fill="none"/><use href="#stk" x="705.1" y="615.5"/><rect x="710.1" y="623.5" width="5" height="1.5" fill="#e8453c"/><text x="721.1" y="625.1" font-size="10" fill="#222" font-family="Liberation Sans">4 / 8</text><use href="#stk" x="789.2" y="615.5"/><path d="M794.7 622.5 L796.5 625.0 L799.7 620.5" stroke="#1aa01a" stroke-width="1.6" fill="none"/><use href="#stk" x="805.2" y="615.5"/><rect x="810.2" y="623.5" width="5" height="1.5" fill="#e8453c"/><text x="821.2" y="625.1" font-size="10" fill="#222" font-family="Liberation Sans">4 / 8</text><use href="#stk" x="889.4" y="615.5"/><path d="M894.9 622.5 L896.7 625.0 L899.9 620.5" stroke="#1aa01a" stroke-width="1.6" fill="none"/><use href="#stk" x="905.4" y="615.5"/><rect x="910.4" y="623.5" width="5" height="1.5" fill="#e8453c"/><text x="921.4" y="625.1" font-size="10" fill="#222" font-family="Liberation Sans">4 / 8</text><use href="#stk" x="989.5" y="615.5"/><path d="M995.0 622.5 L996.8 625.0 L1000.0 620.5" stroke="#1aa01a" stroke-width="1.6" fill="none"/><use href="#stk" x="1005.5" y="615.5"/><rect x="1010.5" y="623.5" width="5" height="1.5" fill="#e8453c"/><text x="1021.5" y="625.1" font-size="10" fill="#222" font-family="Liberation Sans">4 / 8</text><use href="#stk" x="1089.7" y="615.5"/><path d="M1095.2 622.5 L1097.0 625.0 L1100.2 620.5" stroke="#1aa01a" stroke-width="1.6" fill="none"/><use href="#stk" x="1105.7" y="615.5"/><rect x="1110.7" y="623.5" width="5" height="1.5" fill="#e8453c"/><text x="1121.7" y="625.1" font-size="10" fill="#222" font-family="Liberation Sans">4 / 8</text><use href="#stk" x="1189.8" y="615.5"/><path d="M1195.3 622.5 L1197.1 625.0 L1200.3 620.5" stroke="#1aa01a" stroke-width="1.6" fill="none"/><use href="#stk" x="1205.8" y="615.5"/><rect x="1210.8" y="623.5" width="5" height="1.5" fill="#e8453c"/><text x="1221.8" y="625.1" font-size="10" fill="#222" font-family="Liberation Sans">4 / 8</text><use href="#stk" x="1290.0" y="615.5"/><path d="M1295.5 622.5 L1297.3 625.0 L1300.5 620.5" stroke="#1aa01a" stroke-width="1.6" fill="none"/><use href="#stk" x="1306.0" y="615.5"/><rect x="1311.0" y="623.5" width="5" height="1.5" fill="#e8453c"/><text x="1322.0" y="625.1" font-size="10" fill="#222" font-family="Liberation Sans">4 / 8</text><use href="#stk" x="1390.1" y="615.5"/><path d="M1395.6 622.5 L1397.4 625.0 L1400.6 620.5" stroke="#1aa01a" stroke-width="1.6" fill="none"/><use href="#stk" x="1406.1" y="615.5"/><rect x="1411.1" y="623.5" width="5" height="1.5" fill="#e8453c"/><text x="1422.1" y="625.1" font-size="10" fill="#222" font-family="Liberation Sans">4 / 8</text><use href="#chk" x="501.70" y="635.5"/><use href="#chk" x="601.85" y="635.5"/><use href="#chk" x="702.00" y="635.5"/><use href="#chk" x="802.15" y="635.5"/><use href="#chk" x="902.30" y="635.5"/><use href="#chk" x="1002.45" y="635.5"/><use href="#chk" x="1102.60" y="635.5"/><use href="#chk" x="1202.75" y="635.5"/><use href="#chk" x="1302.90" y="635.5"/><use href="#chk" x="1403.05" y="635.5"/><use href="#chk" x="501.70" y="656.5"/><use href="#chk" x="601.85" y="656.5"/><use href="#chk" x="702.00" y="656.5"/><use href="#chk" x="802.15" y="656.5"/><use href="#chk" x="902.30" y="656.5"/><use href="#chk" x="1002.45" y="656.5"/><use href="#chk" x="1102.60" y="656.5"/><use href="#chk" x="1202.75" y="656.5"/><use href="#chk" x="1302.90" y="656.5"/><use href="#chk" x="1403.05" y="656.5"/><use href="#chk" x="501.70" y="677.5"/><use href="#chk" x="601.85" y="677.5"/><use href="#chk" x="702.00" y="677.5"/><use href="#chk" x="802.15" y="677.5"/><use href="#chk" x="902.30" y="677.5"/><use href="#chk" x="1002.45" y="677.5"/><use href="#chk" x="1102.60" y="677.5"/><use href="#chk" x="1202.75" y="677.5"/><use href="#chk" x="1302.90" y="677.5"/><use href="#chk" x="1403.05" y="677.5"/></svg>
</body></html>
